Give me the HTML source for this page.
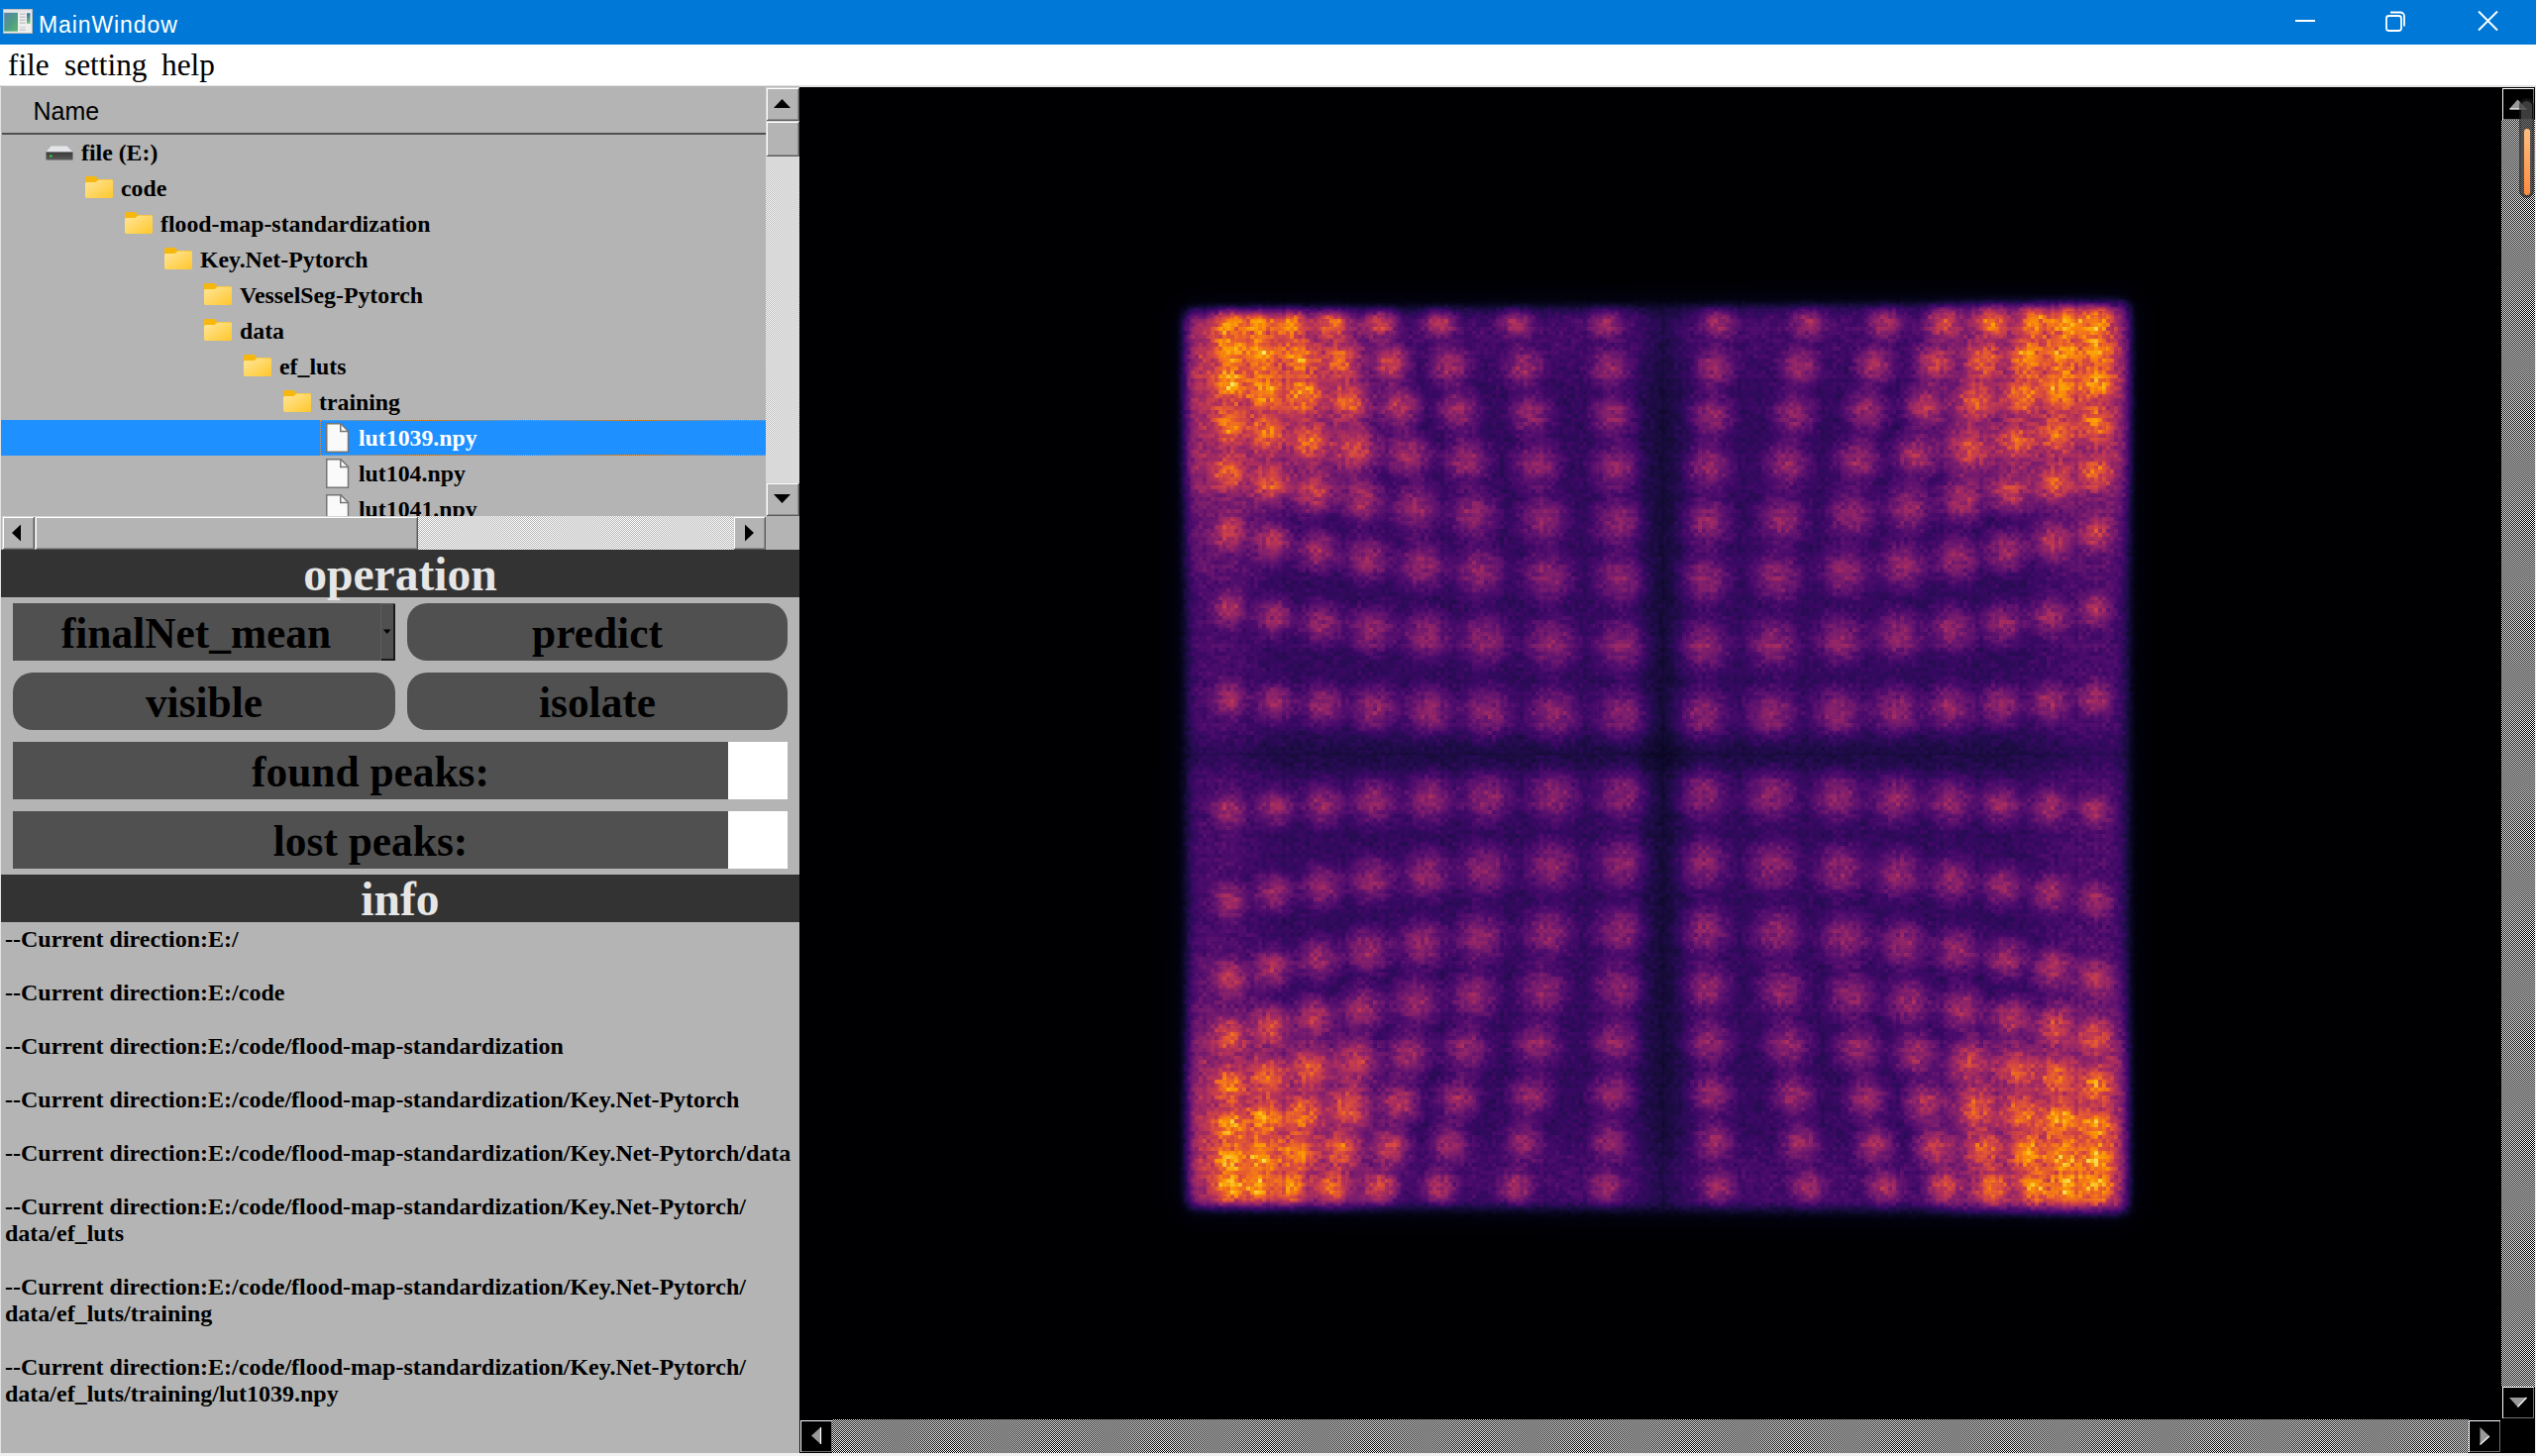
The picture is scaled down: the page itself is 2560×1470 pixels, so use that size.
<!DOCTYPE html>
<html><head><meta charset="utf-8">
<style>
*{margin:0;padding:0;box-sizing:border-box}
html,body{width:2560px;height:1470px;overflow:hidden;background:#f0f0f0}
body{position:relative;font-family:"Liberation Serif",serif}
.a{position:absolute}
#title{left:0;top:0;width:2560px;height:45px;background:#0078d7}
#title .t{left:39px;top:10px;font:23px/30px "Liberation Sans",sans-serif;color:#fff;letter-spacing:0.9px}
#menu{left:0;top:45px;width:2560px;height:42px;background:#fff}
#menu span{position:absolute;top:3px;font:31.3px/36px "Liberation Serif",serif;color:#000}
#left{left:0;top:87px;width:807px;height:1383px;background:#b4b4b4}
.tree{font:bold 23.8px/36px "Liberation Serif",serif;color:#000;white-space:nowrap}
.chk{background:repeating-conic-gradient(#fff 0 25%,#b4b4b4 0 50%) 0 0/2px 2px}
.chk2{background:repeating-conic-gradient(#fff 0 25%,#000 0 50%) 0 0/2px 2px}
.btn3d{background:#b4b4b4;box-shadow:inset 1px 1px 0 #d4d4d4,inset -1px -1px 0 #5a5a5a,inset 2px 2px 0 #fff,inset -2px -2px 0 #8c8c8c}
.band{left:1px;width:806px;background:#333;color:#e6e6e6;font:bold 47.6px/48px "Liberation Serif",serif;text-align:center}
.gbtn{background:#505050;color:#000;font:bold 43.4px/58px "Liberation Serif",serif;text-align:center;white-space:nowrap}
.info p{font:bold 24px/27px "Liberation Serif",serif;color:#000;margin:0 0 27px 0}
.bb{background:#000;box-shadow:inset 1px 1px 0 #fff,inset -1px -1px 0 #6e6e6e,inset 2px 2px 0 #000,inset -2px -2px 0 #000}
</style></head><body>

<div id="title" class="a">
  <svg class="a" style="left:3px;top:9px" width="30" height="25" viewBox="0 0 30 25">
    <defs><linearGradient id="ig" x1="0" y1="0" x2="1" y2="1"><stop offset="0" stop-color="#5a82a8"/><stop offset="0.5" stop-color="#4e9a88"/><stop offset="1" stop-color="#62b56c"/></linearGradient>
    <linearGradient id="ig2" x1="0" y1="0" x2="0" y2="1"><stop offset="0" stop-color="#3f6aa0"/><stop offset="1" stop-color="#72c47a"/></linearGradient></defs>
    <rect x="0.4" y="0.4" width="29.2" height="24.2" fill="#eeeeee" stroke="#c9b6a2" stroke-width="0.8"/>
    <rect x="0.8" y="0.8" width="28.4" height="2.6" fill="#e2e4ea"/>
    <rect x="1.2" y="3.8" width="13.8" height="18.9" fill="url(#ig)"/>
    <rect x="17" y="4.4" width="5.7" height="1.6" fill="#c8c8c8"/><rect x="17" y="7.4" width="5.7" height="1.6" fill="#c8c8c8"/>
    <rect x="17" y="10.4" width="5.7" height="1.6" fill="#c8c8c8"/><rect x="17" y="13.4" width="5.7" height="1.6" fill="#c8c8c8"/>
    <rect x="17" y="18" width="5.7" height="0.8" fill="#c8c8c8"/><rect x="17" y="20.2" width="5.7" height="1.6" fill="#c8c8c8"/>
    <rect x="24" y="4.2" width="3.5" height="10.6" fill="url(#ig2)"/>
  </svg>
  <div class="a t">MainWindow</div>
  <svg class="a" style="left:2300px;top:0" width="260" height="45" viewBox="2300 0 260 45">
    <rect x="2317" y="20" width="20" height="2" fill="#fff"/>
    <rect x="2409" y="16" width="15" height="15" rx="2.5" fill="none" stroke="#fff" stroke-width="1.8"/>
    <path d="M2413 12.5 h10 a4 4 0 0 1 4 4 v10" fill="none" stroke="#fff" stroke-width="1.8"/>
    <path d="M2502 11.5 L2521 30.5 M2521 11.5 L2502 30.5" stroke="#fff" stroke-width="1.9"/>
  </svg>
</div>

<div id="menu" class="a">
  <span style="left:8px">file</span>
  <span style="left:65px">setting</span>
  <span style="left:163px">help</span>
</div>
<div class="a" style="left:0;top:86px;width:2560px;height:2px;background:#e3e3e3"></div>
<div id="left" class="a"></div>
<svg width="0" height="0" style="position:absolute"><defs>
<linearGradient id="fg" x1="0" y1="0" x2="1" y2="1"><stop offset="0" stop-color="#ffe69a"/><stop offset="1" stop-color="#ffc72c"/></linearGradient>
</defs></svg>
<div class="a" style="left:2px;top:88px;width:771px;height:46px;background:#b4b4b4"></div>
<div class="a" style="left:33.5px;top:97px;font:25px/30px 'Liberation Sans',sans-serif;color:#000">Name</div>
<div class="a" style="left:2px;top:134px;width:771px;height:2px;background:#505050"></div>
<div class="a tree" style="left:0;top:136px;width:773px;height:385px;overflow:hidden">
<svg class="a" style="left:46px;top:11px" width="28" height="15" viewBox="0 0 28 15">
<defs><linearGradient id="dg1" x1="0" y1="0" x2="0" y2="1"><stop offset="0" stop-color="#3a3a3a"/><stop offset="1" stop-color="#5a5a5a"/></linearGradient></defs>
<path d="M5.5 0.5 H21.5 L27.5 6.5 H0.5 Z" fill="#e4e5e8"/>
<rect x="0.5" y="6.5" width="27" height="8" fill="url(#dg1)"/>
<circle cx="5.3" cy="10.6" r="1.3" fill="#2fd02f"/>
</svg>
<div class="a" style="left:82px;top:0px;color:#000">file (E:)</div>
<svg class="a" style="left:86px;top:42px" width="28" height="22" viewBox="0 0 28 22">
<path d="M0 1.2 Q0 0 1.2 0 H10.5 L13.5 3 H26.8 Q28 3 28 4.2 V8 H0 Z" fill="#f6b70f"/>
<path d="M0 7.5 Q0 6 1.5 6 H10.5 L13.5 3.6 H26.5 Q28 3.6 28 5 V20.6 Q28 22 26.6 22 H1.4 Q0 22 0 20.6 Z" fill="url(#fg)"/>
</svg>
<div class="a" style="left:122px;top:36px;color:#000">code</div>
<svg class="a" style="left:126px;top:78px" width="28" height="22" viewBox="0 0 28 22">
<path d="M0 1.2 Q0 0 1.2 0 H10.5 L13.5 3 H26.8 Q28 3 28 4.2 V8 H0 Z" fill="#f6b70f"/>
<path d="M0 7.5 Q0 6 1.5 6 H10.5 L13.5 3.6 H26.5 Q28 3.6 28 5 V20.6 Q28 22 26.6 22 H1.4 Q0 22 0 20.6 Z" fill="url(#fg)"/>
</svg>
<div class="a" style="left:162px;top:72px;color:#000">flood-map-standardization</div>
<svg class="a" style="left:166px;top:114px" width="28" height="22" viewBox="0 0 28 22">
<path d="M0 1.2 Q0 0 1.2 0 H10.5 L13.5 3 H26.8 Q28 3 28 4.2 V8 H0 Z" fill="#f6b70f"/>
<path d="M0 7.5 Q0 6 1.5 6 H10.5 L13.5 3.6 H26.5 Q28 3.6 28 5 V20.6 Q28 22 26.6 22 H1.4 Q0 22 0 20.6 Z" fill="url(#fg)"/>
</svg>
<div class="a" style="left:202px;top:108px;color:#000">Key.Net-Pytorch</div>
<svg class="a" style="left:206px;top:150px" width="28" height="22" viewBox="0 0 28 22">
<path d="M0 1.2 Q0 0 1.2 0 H10.5 L13.5 3 H26.8 Q28 3 28 4.2 V8 H0 Z" fill="#f6b70f"/>
<path d="M0 7.5 Q0 6 1.5 6 H10.5 L13.5 3.6 H26.5 Q28 3.6 28 5 V20.6 Q28 22 26.6 22 H1.4 Q0 22 0 20.6 Z" fill="url(#fg)"/>
</svg>
<div class="a" style="left:242px;top:144px;color:#000">VesselSeg-Pytorch</div>
<svg class="a" style="left:206px;top:186px" width="28" height="22" viewBox="0 0 28 22">
<path d="M0 1.2 Q0 0 1.2 0 H10.5 L13.5 3 H26.8 Q28 3 28 4.2 V8 H0 Z" fill="#f6b70f"/>
<path d="M0 7.5 Q0 6 1.5 6 H10.5 L13.5 3.6 H26.5 Q28 3.6 28 5 V20.6 Q28 22 26.6 22 H1.4 Q0 22 0 20.6 Z" fill="url(#fg)"/>
</svg>
<div class="a" style="left:242px;top:180px;color:#000">data</div>
<svg class="a" style="left:246px;top:222px" width="28" height="22" viewBox="0 0 28 22">
<path d="M0 1.2 Q0 0 1.2 0 H10.5 L13.5 3 H26.8 Q28 3 28 4.2 V8 H0 Z" fill="#f6b70f"/>
<path d="M0 7.5 Q0 6 1.5 6 H10.5 L13.5 3.6 H26.5 Q28 3.6 28 5 V20.6 Q28 22 26.6 22 H1.4 Q0 22 0 20.6 Z" fill="url(#fg)"/>
</svg>
<div class="a" style="left:282px;top:216px;color:#000">ef_luts</div>
<svg class="a" style="left:286px;top:258px" width="28" height="22" viewBox="0 0 28 22">
<path d="M0 1.2 Q0 0 1.2 0 H10.5 L13.5 3 H26.8 Q28 3 28 4.2 V8 H0 Z" fill="#f6b70f"/>
<path d="M0 7.5 Q0 6 1.5 6 H10.5 L13.5 3.6 H26.5 Q28 3.6 28 5 V20.6 Q28 22 26.6 22 H1.4 Q0 22 0 20.6 Z" fill="url(#fg)"/>
</svg>
<div class="a" style="left:322px;top:252px;color:#000">training</div>
<div class="a" style="left:0;top:288px;width:773px;height:36px;background:#1e90ff"></div>
<div class="a" style="left:323px;top:288px;width:452px;height:36px;border:1px dotted #f08a1c"></div>
<svg class="a" style="left:329px;top:291px" width="24" height="30" viewBox="0 0 24 30">
<path d="M0.75 0.75 H15 L22.5 8.25 V29.25 H0.75 Z" fill="#fafafa" stroke="#757575" stroke-width="1.5"/>
<path d="M14.75 0.75 V8.5 H22.5" fill="none" stroke="#757575" stroke-width="1.5"/>
</svg>
<div class="a" style="left:362px;top:288px;color:#fff">lut1039.npy</div>
<svg class="a" style="left:329px;top:327px" width="24" height="30" viewBox="0 0 24 30">
<path d="M0.75 0.75 H15 L22.5 8.25 V29.25 H0.75 Z" fill="#fafafa" stroke="#757575" stroke-width="1.5"/>
<path d="M14.75 0.75 V8.5 H22.5" fill="none" stroke="#757575" stroke-width="1.5"/>
</svg>
<div class="a" style="left:362px;top:324px;color:#000">lut104.npy</div>
<svg class="a" style="left:329px;top:363px" width="24" height="30" viewBox="0 0 24 30">
<path d="M0.75 0.75 H15 L22.5 8.25 V29.25 H0.75 Z" fill="#fafafa" stroke="#757575" stroke-width="1.5"/>
<path d="M14.75 0.75 V8.5 H22.5" fill="none" stroke="#757575" stroke-width="1.5"/>
</svg>
<div class="a" style="left:362px;top:360px;color:#000">lut1041.npy</div>
</div>
<div class="a chk" style="left:773px;top:88px;width:34px;height:433px"></div>
<div class="a btn3d" style="left:773px;top:88px;width:34px;height:34px"></div>
<svg class="a" style="left:773px;top:88px" width="34" height="34"><path d="M8 21 L16.5 12 L25 21 Z" fill="#000"/></svg>
<div class="a btn3d" style="left:773px;top:122px;width:34px;height:36px"></div>
<div class="a btn3d" style="left:773px;top:487px;width:34px;height:34px"></div>
<svg class="a" style="left:773px;top:487px" width="34" height="34"><path d="M8 12 L16.5 21 L25 12 Z" fill="#000"/></svg>
<div class="a chk" style="left:35px;top:521px;width:705px;height:34px"></div>
<div class="a btn3d" style="left:2px;top:521px;width:33px;height:34px"></div>
<svg class="a" style="left:0;top:521px" width="35" height="34"><path d="M21 8.5 L12 17 L21 25.5 Z" fill="#000"/></svg>
<div class="a btn3d" style="left:35px;top:521px;width:387px;height:34px"></div>
<div class="a btn3d" style="left:740px;top:521px;width:33px;height:34px"></div>
<svg class="a" style="left:740px;top:521px" width="33" height="34"><path d="M12 8.5 L21 17 L12 25.5 Z" fill="#000"/></svg>
<div class="a" style="left:773px;top:521px;width:34px;height:34px;background:#b4b4b4"></div>
<div class="a band" style="top:555px;height:48px"><div style="position:relative;top:1px">operation</div></div>
<div class="a gbtn" style="left:13px;top:609px;width:386px;height:58px"></div>
<div class="a gbtn" style="left:13px;top:609px;width:370px;height:58px;line-height:60px">finalNet_mean</div>
<div class="a" style="left:384px;top:609px;width:15px;height:58px;background:#505050;box-shadow:inset 1px 1px 0 #5e5e5e,inset -2px -2px 0 #1a1a1a"></div>
<svg class="a" style="left:384px;top:609px" width="15" height="58"><path d="M3 26.5 L10.5 26.5 L6.75 31 Z" fill="#000"/></svg>
<div class="a gbtn" style="left:411px;top:609px;width:384px;height:58px;border-radius:20px;line-height:60px">predict</div>
<div class="a gbtn" style="left:13px;top:679px;width:386px;height:58px;border-radius:20px;line-height:60px">visible</div>
<div class="a gbtn" style="left:411px;top:679px;width:384px;height:58px;border-radius:20px;line-height:60px">isolate</div>
<div class="a gbtn" style="left:13px;top:749px;width:722px;height:58px;line-height:60px">found peaks:</div>
<div class="a" style="left:735px;top:749px;width:60px;height:58px;background:#fff"></div>
<div class="a gbtn" style="left:13px;top:819px;width:722px;height:58px;line-height:60px">lost peaks:</div>
<div class="a" style="left:735px;top:819px;width:60px;height:58px;background:#fff"></div>
<div class="a band" style="top:883px;height:48px"><div style="position:relative;top:1px">info</div></div>
<div class="a info" style="left:5px;top:935px;width:802px;white-space:nowrap"><p>--Current direction:E:/</p><p>--Current direction:E:/code</p><p>--Current direction:E:/code/flood-map-standardization</p><p>--Current direction:E:/code/flood-map-standardization/Key.Net-Pytorch</p><p>--Current direction:E:/code/flood-map-standardization/Key.Net-Pytorch/data</p><p>--Current direction:E:/code/flood-map-standardization/Key.Net-Pytorch/<br>data/ef_luts</p><p>--Current direction:E:/code/flood-map-standardization/Key.Net-Pytorch/<br>data/ef_luts/training</p><p>--Current direction:E:/code/flood-map-standardization/Key.Net-Pytorch/<br>data/ef_luts/training/lut1039.npy</p></div>
<div class="a" style="left:0;top:88px;width:1px;height:1379px;background:#e3e3e3"></div>
<div id="gv" class="a" style="left:807px;top:88px;width:1753px;height:1379px;background:#000;overflow:hidden"><svg class="a" style="left:0;top:0" width="1753" height="1379" viewBox="807 88 1753 1379">
<defs>
<filter id="cm" filterUnits="userSpaceOnUse" x="807" y="88" width="1753" height="1379" color-interpolation-filters="sRGB"><feComponentTransfer><feFuncR type="table" tableValues="0.0015 0.0140 0.0423 0.0820 0.1293 0.1834 0.2383 0.2908 0.3415 0.3915 0.4412 0.4910 0.5409 0.5907 0.6401 0.6887 0.7357 0.7805 0.8224 0.8605 0.8943 0.9232 0.9470 0.9654 0.9784 0.9860 0.9879 0.9841 0.9746 0.9606 0.9476 0.9545 0.9884"/><feFuncG type="table" tableValues="0.0005 0.0112 0.0281 0.0433 0.0473 0.0403 0.0366 0.0456 0.0623 0.0809 0.0993 0.1172 0.1347 0.1526 0.1714 0.1922 0.2159 0.2433 0.2752 0.3119 0.3534 0.3994 0.4492 0.5022 0.5579 0.6158 0.6753 0.7361 0.7977 0.8591 0.9174 0.9659 0.9984"/><feFuncB type="table" tableValues="0.0139 0.0719 0.1411 0.2153 0.2908 0.3550 0.3964 0.4186 0.4294 0.4331 0.4316 0.4256 0.4151 0.4003 0.3811 0.3576 0.3302 0.2995 0.2661 0.2306 0.1936 0.1552 0.1153 0.0739 0.0349 0.0256 0.0653 0.1295 0.2063 0.2980 0.4107 0.5404 0.6449"/></feComponentTransfer></filter>
<filter id="bb" x="-20%" y="-20%" width="140%" height="140%"><feGaussianBlur stdDeviation="11"/></filter>
<filter id="gb" x="-50%" y="-50%" width="200%" height="200%"><feGaussianBlur stdDeviation="20"/></filter>
<filter id="gb2" x="-50%" y="-50%" width="200%" height="200%"><feGaussianBlur stdDeviation="14"/></filter>
<radialGradient id="g"><stop offset="0.00" stop-color="#fff" stop-opacity="1.000"/><stop offset="0.15" stop-color="#fff" stop-opacity="0.938"/><stop offset="0.30" stop-color="#fff" stop-opacity="0.772"/><stop offset="0.45" stop-color="#fff" stop-opacity="0.554"/><stop offset="0.60" stop-color="#fff" stop-opacity="0.339"/><stop offset="0.75" stop-color="#fff" stop-opacity="0.167"/><stop offset="0.90" stop-color="#fff" stop-opacity="0.050"/><stop offset="1.00" stop-color="#fff" stop-opacity="0.000"/></radialGradient>
<pattern id="nz" patternUnits="userSpaceOnUse" x="1186" y="306" width="80" height="80"><rect x="0" y="0" width="4" height="4" fill-opacity="0.07"/><rect x="4" y="0" width="4" height="4" fill-opacity="0.03"/><rect x="8" y="0" width="4" height="4" fill-opacity="0.14"/><rect x="16" y="0" width="4" height="4" fill-opacity="0.12"/><rect x="20" y="0" width="4" height="4" fill-opacity="0.08"/><rect x="28" y="0" width="4" height="4" fill-opacity="0.11"/><rect x="36" y="0" width="4" height="4" fill-opacity="0.10"/><rect x="48" y="0" width="4" height="4" fill-opacity="0.09"/><rect x="52" y="0" width="4" height="4" fill-opacity="0.18"/><rect x="60" y="0" width="4" height="4" fill-opacity="0.05"/><rect x="64" y="0" width="4" height="4" fill-opacity="0.14"/><rect x="68" y="0" width="4" height="4" fill-opacity="0.21"/><rect x="72" y="0" width="4" height="4" fill-opacity="0.13"/><rect x="76" y="0" width="4" height="4" fill-opacity="0.09"/><rect x="0" y="4" width="4" height="4" fill-opacity="0.21"/><rect x="8" y="4" width="4" height="4" fill-opacity="0.19"/><rect x="12" y="4" width="4" height="4" fill-opacity="0.06"/><rect x="16" y="4" width="4" height="4" fill-opacity="0.03"/><rect x="24" y="4" width="4" height="4" fill-opacity="0.07"/><rect x="28" y="4" width="4" height="4" fill-opacity="0.18"/><rect x="32" y="4" width="4" height="4" fill-opacity="0.04"/><rect x="36" y="4" width="4" height="4" fill-opacity="0.13"/><rect x="40" y="4" width="4" height="4" fill-opacity="0.14"/><rect x="44" y="4" width="4" height="4" fill-opacity="0.08"/><rect x="48" y="4" width="4" height="4" fill-opacity="0.12"/><rect x="60" y="4" width="4" height="4" fill-opacity="0.05"/><rect x="64" y="4" width="4" height="4" fill-opacity="0.15"/><rect x="68" y="4" width="4" height="4" fill-opacity="0.09"/><rect x="72" y="4" width="4" height="4" fill-opacity="0.07"/><rect x="76" y="4" width="4" height="4" fill-opacity="0.13"/><rect x="0" y="8" width="4" height="4" fill-opacity="0.10"/><rect x="4" y="8" width="4" height="4" fill-opacity="0.07"/><rect x="8" y="8" width="4" height="4" fill-opacity="0.17"/><rect x="12" y="8" width="4" height="4" fill-opacity="0.15"/><rect x="16" y="8" width="4" height="4" fill-opacity="0.05"/><rect x="20" y="8" width="4" height="4" fill-opacity="0.13"/><rect x="24" y="8" width="4" height="4" fill-opacity="0.12"/><rect x="28" y="8" width="4" height="4" fill-opacity="0.19"/><rect x="32" y="8" width="4" height="4" fill-opacity="0.16"/><rect x="36" y="8" width="4" height="4" fill-opacity="0.06"/><rect x="40" y="8" width="4" height="4" fill-opacity="0.22"/><rect x="48" y="8" width="4" height="4" fill-opacity="0.09"/><rect x="52" y="8" width="4" height="4" fill-opacity="0.17"/><rect x="56" y="8" width="4" height="4" fill-opacity="0.03"/><rect x="60" y="8" width="4" height="4" fill-opacity="0.11"/><rect x="68" y="8" width="4" height="4" fill-opacity="0.15"/><rect x="72" y="8" width="4" height="4" fill-opacity="0.17"/><rect x="76" y="8" width="4" height="4" fill-opacity="0.13"/><rect x="0" y="12" width="4" height="4" fill-opacity="0.19"/><rect x="4" y="12" width="4" height="4" fill-opacity="0.07"/><rect x="8" y="12" width="4" height="4" fill-opacity="0.15"/><rect x="12" y="12" width="4" height="4" fill-opacity="0.13"/><rect x="16" y="12" width="4" height="4" fill-opacity="0.13"/><rect x="20" y="12" width="4" height="4" fill-opacity="0.10"/><rect x="24" y="12" width="4" height="4" fill-opacity="0.18"/><rect x="28" y="12" width="4" height="4" fill-opacity="0.21"/><rect x="32" y="12" width="4" height="4" fill-opacity="0.10"/><rect x="36" y="12" width="4" height="4" fill-opacity="0.15"/><rect x="44" y="12" width="4" height="4" fill-opacity="0.15"/><rect x="48" y="12" width="4" height="4" fill-opacity="0.14"/><rect x="52" y="12" width="4" height="4" fill-opacity="0.22"/><rect x="56" y="12" width="4" height="4" fill-opacity="0.18"/><rect x="60" y="12" width="4" height="4" fill-opacity="0.06"/><rect x="64" y="12" width="4" height="4" fill-opacity="0.08"/><rect x="68" y="12" width="4" height="4" fill-opacity="0.15"/><rect x="76" y="12" width="4" height="4" fill-opacity="0.10"/><rect x="0" y="16" width="4" height="4" fill-opacity="0.04"/><rect x="12" y="16" width="4" height="4" fill-opacity="0.17"/><rect x="20" y="16" width="4" height="4" fill-opacity="0.05"/><rect x="24" y="16" width="4" height="4" fill-opacity="0.09"/><rect x="28" y="16" width="4" height="4" fill-opacity="0.19"/><rect x="36" y="16" width="4" height="4" fill-opacity="0.10"/><rect x="40" y="16" width="4" height="4" fill-opacity="0.12"/><rect x="44" y="16" width="4" height="4" fill-opacity="0.19"/><rect x="48" y="16" width="4" height="4" fill-opacity="0.18"/><rect x="52" y="16" width="4" height="4" fill-opacity="0.19"/><rect x="56" y="16" width="4" height="4" fill-opacity="0.06"/><rect x="60" y="16" width="4" height="4" fill-opacity="0.09"/><rect x="64" y="16" width="4" height="4" fill-opacity="0.08"/><rect x="68" y="16" width="4" height="4" fill-opacity="0.19"/><rect x="72" y="16" width="4" height="4" fill-opacity="0.21"/><rect x="76" y="16" width="4" height="4" fill-opacity="0.03"/><rect x="0" y="20" width="4" height="4" fill-opacity="0.04"/><rect x="4" y="20" width="4" height="4" fill-opacity="0.05"/><rect x="8" y="20" width="4" height="4" fill-opacity="0.05"/><rect x="12" y="20" width="4" height="4" fill-opacity="0.11"/><rect x="16" y="20" width="4" height="4" fill-opacity="0.13"/><rect x="20" y="20" width="4" height="4" fill-opacity="0.06"/><rect x="28" y="20" width="4" height="4" fill-opacity="0.09"/><rect x="32" y="20" width="4" height="4" fill-opacity="0.08"/><rect x="36" y="20" width="4" height="4" fill-opacity="0.12"/><rect x="40" y="20" width="4" height="4" fill-opacity="0.21"/><rect x="44" y="20" width="4" height="4" fill-opacity="0.15"/><rect x="48" y="20" width="4" height="4" fill-opacity="0.11"/><rect x="52" y="20" width="4" height="4" fill-opacity="0.14"/><rect x="56" y="20" width="4" height="4" fill-opacity="0.15"/><rect x="64" y="20" width="4" height="4" fill-opacity="0.20"/><rect x="68" y="20" width="4" height="4" fill-opacity="0.17"/><rect x="72" y="20" width="4" height="4" fill-opacity="0.19"/><rect x="76" y="20" width="4" height="4" fill-opacity="0.18"/><rect x="0" y="24" width="4" height="4" fill-opacity="0.09"/><rect x="4" y="24" width="4" height="4" fill-opacity="0.09"/><rect x="12" y="24" width="4" height="4" fill-opacity="0.14"/><rect x="24" y="24" width="4" height="4" fill-opacity="0.05"/><rect x="28" y="24" width="4" height="4" fill-opacity="0.04"/><rect x="32" y="24" width="4" height="4" fill-opacity="0.07"/><rect x="44" y="24" width="4" height="4" fill-opacity="0.03"/><rect x="52" y="24" width="4" height="4" fill-opacity="0.08"/><rect x="60" y="24" width="4" height="4" fill-opacity="0.19"/><rect x="64" y="24" width="4" height="4" fill-opacity="0.14"/><rect x="68" y="24" width="4" height="4" fill-opacity="0.03"/><rect x="72" y="24" width="4" height="4" fill-opacity="0.06"/><rect x="76" y="24" width="4" height="4" fill-opacity="0.08"/><rect x="0" y="28" width="4" height="4" fill-opacity="0.08"/><rect x="8" y="28" width="4" height="4" fill-opacity="0.19"/><rect x="12" y="28" width="4" height="4" fill-opacity="0.22"/><rect x="16" y="28" width="4" height="4" fill-opacity="0.10"/><rect x="20" y="28" width="4" height="4" fill-opacity="0.11"/><rect x="32" y="28" width="4" height="4" fill-opacity="0.08"/><rect x="36" y="28" width="4" height="4" fill-opacity="0.06"/><rect x="40" y="28" width="4" height="4" fill-opacity="0.18"/><rect x="44" y="28" width="4" height="4" fill-opacity="0.04"/><rect x="52" y="28" width="4" height="4" fill-opacity="0.21"/><rect x="56" y="28" width="4" height="4" fill-opacity="0.12"/><rect x="60" y="28" width="4" height="4" fill-opacity="0.03"/><rect x="64" y="28" width="4" height="4" fill-opacity="0.12"/><rect x="72" y="28" width="4" height="4" fill-opacity="0.12"/><rect x="76" y="28" width="4" height="4" fill-opacity="0.22"/><rect x="0" y="32" width="4" height="4" fill-opacity="0.19"/><rect x="4" y="32" width="4" height="4" fill-opacity="0.15"/><rect x="8" y="32" width="4" height="4" fill-opacity="0.06"/><rect x="12" y="32" width="4" height="4" fill-opacity="0.08"/><rect x="16" y="32" width="4" height="4" fill-opacity="0.04"/><rect x="20" y="32" width="4" height="4" fill-opacity="0.17"/><rect x="24" y="32" width="4" height="4" fill-opacity="0.12"/><rect x="28" y="32" width="4" height="4" fill-opacity="0.17"/><rect x="32" y="32" width="4" height="4" fill-opacity="0.07"/><rect x="36" y="32" width="4" height="4" fill-opacity="0.05"/><rect x="40" y="32" width="4" height="4" fill-opacity="0.18"/><rect x="44" y="32" width="4" height="4" fill-opacity="0.22"/><rect x="48" y="32" width="4" height="4" fill-opacity="0.19"/><rect x="52" y="32" width="4" height="4" fill-opacity="0.18"/><rect x="56" y="32" width="4" height="4" fill-opacity="0.18"/><rect x="60" y="32" width="4" height="4" fill-opacity="0.16"/><rect x="64" y="32" width="4" height="4" fill-opacity="0.05"/><rect x="68" y="32" width="4" height="4" fill-opacity="0.11"/><rect x="72" y="32" width="4" height="4" fill-opacity="0.08"/><rect x="4" y="36" width="4" height="4" fill-opacity="0.06"/><rect x="8" y="36" width="4" height="4" fill-opacity="0.06"/><rect x="12" y="36" width="4" height="4" fill-opacity="0.15"/><rect x="16" y="36" width="4" height="4" fill-opacity="0.21"/><rect x="20" y="36" width="4" height="4" fill-opacity="0.10"/><rect x="24" y="36" width="4" height="4" fill-opacity="0.21"/><rect x="28" y="36" width="4" height="4" fill-opacity="0.22"/><rect x="32" y="36" width="4" height="4" fill-opacity="0.21"/><rect x="36" y="36" width="4" height="4" fill-opacity="0.08"/><rect x="40" y="36" width="4" height="4" fill-opacity="0.05"/><rect x="44" y="36" width="4" height="4" fill-opacity="0.05"/><rect x="48" y="36" width="4" height="4" fill-opacity="0.04"/><rect x="52" y="36" width="4" height="4" fill-opacity="0.04"/><rect x="56" y="36" width="4" height="4" fill-opacity="0.14"/><rect x="60" y="36" width="4" height="4" fill-opacity="0.20"/><rect x="64" y="36" width="4" height="4" fill-opacity="0.18"/><rect x="68" y="36" width="4" height="4" fill-opacity="0.11"/><rect x="72" y="36" width="4" height="4" fill-opacity="0.14"/><rect x="76" y="36" width="4" height="4" fill-opacity="0.18"/><rect x="4" y="40" width="4" height="4" fill-opacity="0.15"/><rect x="8" y="40" width="4" height="4" fill-opacity="0.20"/><rect x="12" y="40" width="4" height="4" fill-opacity="0.17"/><rect x="16" y="40" width="4" height="4" fill-opacity="0.17"/><rect x="20" y="40" width="4" height="4" fill-opacity="0.11"/><rect x="24" y="40" width="4" height="4" fill-opacity="0.04"/><rect x="28" y="40" width="4" height="4" fill-opacity="0.17"/><rect x="32" y="40" width="4" height="4" fill-opacity="0.07"/><rect x="36" y="40" width="4" height="4" fill-opacity="0.18"/><rect x="40" y="40" width="4" height="4" fill-opacity="0.21"/><rect x="44" y="40" width="4" height="4" fill-opacity="0.09"/><rect x="48" y="40" width="4" height="4" fill-opacity="0.09"/><rect x="52" y="40" width="4" height="4" fill-opacity="0.21"/><rect x="56" y="40" width="4" height="4" fill-opacity="0.16"/><rect x="60" y="40" width="4" height="4" fill-opacity="0.04"/><rect x="68" y="40" width="4" height="4" fill-opacity="0.03"/><rect x="72" y="40" width="4" height="4" fill-opacity="0.20"/><rect x="76" y="40" width="4" height="4" fill-opacity="0.18"/><rect x="0" y="44" width="4" height="4" fill-opacity="0.03"/><rect x="4" y="44" width="4" height="4" fill-opacity="0.18"/><rect x="8" y="44" width="4" height="4" fill-opacity="0.22"/><rect x="12" y="44" width="4" height="4" fill-opacity="0.14"/><rect x="16" y="44" width="4" height="4" fill-opacity="0.08"/><rect x="20" y="44" width="4" height="4" fill-opacity="0.12"/><rect x="32" y="44" width="4" height="4" fill-opacity="0.21"/><rect x="36" y="44" width="4" height="4" fill-opacity="0.14"/><rect x="40" y="44" width="4" height="4" fill-opacity="0.12"/><rect x="44" y="44" width="4" height="4" fill-opacity="0.21"/><rect x="48" y="44" width="4" height="4" fill-opacity="0.10"/><rect x="52" y="44" width="4" height="4" fill-opacity="0.19"/><rect x="56" y="44" width="4" height="4" fill-opacity="0.18"/><rect x="60" y="44" width="4" height="4" fill-opacity="0.05"/><rect x="64" y="44" width="4" height="4" fill-opacity="0.06"/><rect x="68" y="44" width="4" height="4" fill-opacity="0.06"/><rect x="72" y="44" width="4" height="4" fill-opacity="0.05"/><rect x="76" y="44" width="4" height="4" fill-opacity="0.13"/><rect x="0" y="48" width="4" height="4" fill-opacity="0.06"/><rect x="4" y="48" width="4" height="4" fill-opacity="0.09"/><rect x="12" y="48" width="4" height="4" fill-opacity="0.20"/><rect x="16" y="48" width="4" height="4" fill-opacity="0.08"/><rect x="20" y="48" width="4" height="4" fill-opacity="0.10"/><rect x="24" y="48" width="4" height="4" fill-opacity="0.13"/><rect x="28" y="48" width="4" height="4" fill-opacity="0.20"/><rect x="32" y="48" width="4" height="4" fill-opacity="0.09"/><rect x="36" y="48" width="4" height="4" fill-opacity="0.20"/><rect x="40" y="48" width="4" height="4" fill-opacity="0.11"/><rect x="44" y="48" width="4" height="4" fill-opacity="0.12"/><rect x="48" y="48" width="4" height="4" fill-opacity="0.12"/><rect x="56" y="48" width="4" height="4" fill-opacity="0.10"/><rect x="60" y="48" width="4" height="4" fill-opacity="0.04"/><rect x="68" y="48" width="4" height="4" fill-opacity="0.18"/><rect x="72" y="48" width="4" height="4" fill-opacity="0.04"/><rect x="76" y="48" width="4" height="4" fill-opacity="0.10"/><rect x="0" y="52" width="4" height="4" fill-opacity="0.16"/><rect x="4" y="52" width="4" height="4" fill-opacity="0.12"/><rect x="8" y="52" width="4" height="4" fill-opacity="0.07"/><rect x="12" y="52" width="4" height="4" fill-opacity="0.11"/><rect x="16" y="52" width="4" height="4" fill-opacity="0.12"/><rect x="20" y="52" width="4" height="4" fill-opacity="0.17"/><rect x="28" y="52" width="4" height="4" fill-opacity="0.12"/><rect x="32" y="52" width="4" height="4" fill-opacity="0.05"/><rect x="36" y="52" width="4" height="4" fill-opacity="0.06"/><rect x="40" y="52" width="4" height="4" fill-opacity="0.17"/><rect x="44" y="52" width="4" height="4" fill-opacity="0.11"/><rect x="48" y="52" width="4" height="4" fill-opacity="0.12"/><rect x="52" y="52" width="4" height="4" fill-opacity="0.17"/><rect x="56" y="52" width="4" height="4" fill-opacity="0.20"/><rect x="60" y="52" width="4" height="4" fill-opacity="0.10"/><rect x="64" y="52" width="4" height="4" fill-opacity="0.13"/><rect x="68" y="52" width="4" height="4" fill-opacity="0.11"/><rect x="72" y="52" width="4" height="4" fill-opacity="0.11"/><rect x="76" y="52" width="4" height="4" fill-opacity="0.15"/><rect x="0" y="56" width="4" height="4" fill-opacity="0.10"/><rect x="4" y="56" width="4" height="4" fill-opacity="0.12"/><rect x="8" y="56" width="4" height="4" fill-opacity="0.11"/><rect x="12" y="56" width="4" height="4" fill-opacity="0.21"/><rect x="16" y="56" width="4" height="4" fill-opacity="0.15"/><rect x="20" y="56" width="4" height="4" fill-opacity="0.19"/><rect x="24" y="56" width="4" height="4" fill-opacity="0.21"/><rect x="28" y="56" width="4" height="4" fill-opacity="0.06"/><rect x="32" y="56" width="4" height="4" fill-opacity="0.12"/><rect x="36" y="56" width="4" height="4" fill-opacity="0.21"/><rect x="40" y="56" width="4" height="4" fill-opacity="0.18"/><rect x="44" y="56" width="4" height="4" fill-opacity="0.03"/><rect x="52" y="56" width="4" height="4" fill-opacity="0.10"/><rect x="60" y="56" width="4" height="4" fill-opacity="0.05"/><rect x="68" y="56" width="4" height="4" fill-opacity="0.15"/><rect x="72" y="56" width="4" height="4" fill-opacity="0.17"/><rect x="76" y="56" width="4" height="4" fill-opacity="0.20"/><rect x="0" y="60" width="4" height="4" fill-opacity="0.03"/><rect x="4" y="60" width="4" height="4" fill-opacity="0.16"/><rect x="8" y="60" width="4" height="4" fill-opacity="0.15"/><rect x="12" y="60" width="4" height="4" fill-opacity="0.03"/><rect x="16" y="60" width="4" height="4" fill-opacity="0.19"/><rect x="20" y="60" width="4" height="4" fill-opacity="0.21"/><rect x="24" y="60" width="4" height="4" fill-opacity="0.05"/><rect x="28" y="60" width="4" height="4" fill-opacity="0.21"/><rect x="32" y="60" width="4" height="4" fill-opacity="0.09"/><rect x="36" y="60" width="4" height="4" fill-opacity="0.11"/><rect x="40" y="60" width="4" height="4" fill-opacity="0.22"/><rect x="44" y="60" width="4" height="4" fill-opacity="0.18"/><rect x="48" y="60" width="4" height="4" fill-opacity="0.04"/><rect x="52" y="60" width="4" height="4" fill-opacity="0.09"/><rect x="56" y="60" width="4" height="4" fill-opacity="0.11"/><rect x="60" y="60" width="4" height="4" fill-opacity="0.07"/><rect x="64" y="60" width="4" height="4" fill-opacity="0.04"/><rect x="68" y="60" width="4" height="4" fill-opacity="0.07"/><rect x="72" y="60" width="4" height="4" fill-opacity="0.16"/><rect x="0" y="64" width="4" height="4" fill-opacity="0.12"/><rect x="4" y="64" width="4" height="4" fill-opacity="0.10"/><rect x="12" y="64" width="4" height="4" fill-opacity="0.07"/><rect x="16" y="64" width="4" height="4" fill-opacity="0.14"/><rect x="20" y="64" width="4" height="4" fill-opacity="0.11"/><rect x="28" y="64" width="4" height="4" fill-opacity="0.22"/><rect x="32" y="64" width="4" height="4" fill-opacity="0.17"/><rect x="36" y="64" width="4" height="4" fill-opacity="0.21"/><rect x="44" y="64" width="4" height="4" fill-opacity="0.06"/><rect x="52" y="64" width="4" height="4" fill-opacity="0.17"/><rect x="56" y="64" width="4" height="4" fill-opacity="0.06"/><rect x="64" y="64" width="4" height="4" fill-opacity="0.09"/><rect x="68" y="64" width="4" height="4" fill-opacity="0.20"/><rect x="72" y="64" width="4" height="4" fill-opacity="0.18"/><rect x="76" y="64" width="4" height="4" fill-opacity="0.06"/><rect x="0" y="68" width="4" height="4" fill-opacity="0.03"/><rect x="4" y="68" width="4" height="4" fill-opacity="0.20"/><rect x="8" y="68" width="4" height="4" fill-opacity="0.13"/><rect x="12" y="68" width="4" height="4" fill-opacity="0.15"/><rect x="24" y="68" width="4" height="4" fill-opacity="0.15"/><rect x="28" y="68" width="4" height="4" fill-opacity="0.09"/><rect x="36" y="68" width="4" height="4" fill-opacity="0.21"/><rect x="40" y="68" width="4" height="4" fill-opacity="0.14"/><rect x="44" y="68" width="4" height="4" fill-opacity="0.18"/><rect x="52" y="68" width="4" height="4" fill-opacity="0.19"/><rect x="60" y="68" width="4" height="4" fill-opacity="0.19"/><rect x="64" y="68" width="4" height="4" fill-opacity="0.10"/><rect x="68" y="68" width="4" height="4" fill-opacity="0.07"/><rect x="72" y="68" width="4" height="4" fill-opacity="0.12"/><rect x="76" y="68" width="4" height="4" fill-opacity="0.20"/><rect x="0" y="72" width="4" height="4" fill-opacity="0.06"/><rect x="8" y="72" width="4" height="4" fill-opacity="0.12"/><rect x="12" y="72" width="4" height="4" fill-opacity="0.05"/><rect x="20" y="72" width="4" height="4" fill-opacity="0.04"/><rect x="28" y="72" width="4" height="4" fill-opacity="0.04"/><rect x="32" y="72" width="4" height="4" fill-opacity="0.07"/><rect x="36" y="72" width="4" height="4" fill-opacity="0.07"/><rect x="40" y="72" width="4" height="4" fill-opacity="0.17"/><rect x="44" y="72" width="4" height="4" fill-opacity="0.06"/><rect x="48" y="72" width="4" height="4" fill-opacity="0.11"/><rect x="52" y="72" width="4" height="4" fill-opacity="0.04"/><rect x="56" y="72" width="4" height="4" fill-opacity="0.08"/><rect x="64" y="72" width="4" height="4" fill-opacity="0.06"/><rect x="72" y="72" width="4" height="4" fill-opacity="0.16"/><rect x="76" y="72" width="4" height="4" fill-opacity="0.12"/><rect x="0" y="76" width="4" height="4" fill-opacity="0.04"/><rect x="4" y="76" width="4" height="4" fill-opacity="0.10"/><rect x="8" y="76" width="4" height="4" fill-opacity="0.21"/><rect x="16" y="76" width="4" height="4" fill-opacity="0.18"/><rect x="20" y="76" width="4" height="4" fill-opacity="0.10"/><rect x="24" y="76" width="4" height="4" fill-opacity="0.11"/><rect x="28" y="76" width="4" height="4" fill-opacity="0.18"/><rect x="32" y="76" width="4" height="4" fill-opacity="0.09"/><rect x="36" y="76" width="4" height="4" fill-opacity="0.11"/><rect x="40" y="76" width="4" height="4" fill-opacity="0.15"/><rect x="44" y="76" width="4" height="4" fill-opacity="0.22"/><rect x="48" y="76" width="4" height="4" fill-opacity="0.08"/><rect x="52" y="76" width="4" height="4" fill-opacity="0.18"/><rect x="56" y="76" width="4" height="4" fill-opacity="0.16"/><rect x="60" y="76" width="4" height="4" fill-opacity="0.14"/><rect x="64" y="76" width="4" height="4" fill-opacity="0.09"/><rect x="68" y="76" width="4" height="4" fill-opacity="0.08"/></pattern>
<pattern id="nz2" patternUnits="userSpaceOnUse" x="1186" y="306" width="68" height="68"><rect x="4" y="0" width="4" height="4" fill-opacity="0.12"/><rect x="8" y="0" width="4" height="4" fill-opacity="0.04"/><rect x="20" y="0" width="4" height="4" fill-opacity="0.13"/><rect x="24" y="0" width="4" height="4" fill-opacity="0.14"/><rect x="28" y="0" width="4" height="4" fill-opacity="0.11"/><rect x="32" y="0" width="4" height="4" fill-opacity="0.05"/><rect x="36" y="0" width="4" height="4" fill-opacity="0.04"/><rect x="40" y="0" width="4" height="4" fill-opacity="0.05"/><rect x="44" y="0" width="4" height="4" fill-opacity="0.07"/><rect x="52" y="0" width="4" height="4" fill-opacity="0.07"/><rect x="56" y="0" width="4" height="4" fill-opacity="0.04"/><rect x="60" y="0" width="4" height="4" fill-opacity="0.15"/><rect x="64" y="0" width="4" height="4" fill-opacity="0.16"/><rect x="0" y="4" width="4" height="4" fill-opacity="0.09"/><rect x="4" y="4" width="4" height="4" fill-opacity="0.04"/><rect x="8" y="4" width="4" height="4" fill-opacity="0.15"/><rect x="12" y="4" width="4" height="4" fill-opacity="0.05"/><rect x="16" y="4" width="4" height="4" fill-opacity="0.06"/><rect x="24" y="4" width="4" height="4" fill-opacity="0.06"/><rect x="28" y="4" width="4" height="4" fill-opacity="0.08"/><rect x="32" y="4" width="4" height="4" fill-opacity="0.08"/><rect x="36" y="4" width="4" height="4" fill-opacity="0.03"/><rect x="40" y="4" width="4" height="4" fill-opacity="0.08"/><rect x="48" y="4" width="4" height="4" fill-opacity="0.04"/><rect x="56" y="4" width="4" height="4" fill-opacity="0.06"/><rect x="0" y="8" width="4" height="4" fill-opacity="0.05"/><rect x="4" y="8" width="4" height="4" fill-opacity="0.04"/><rect x="8" y="8" width="4" height="4" fill-opacity="0.09"/><rect x="12" y="8" width="4" height="4" fill-opacity="0.08"/><rect x="16" y="8" width="4" height="4" fill-opacity="0.12"/><rect x="20" y="8" width="4" height="4" fill-opacity="0.11"/><rect x="24" y="8" width="4" height="4" fill-opacity="0.11"/><rect x="28" y="8" width="4" height="4" fill-opacity="0.14"/><rect x="32" y="8" width="4" height="4" fill-opacity="0.06"/><rect x="36" y="8" width="4" height="4" fill-opacity="0.05"/><rect x="40" y="8" width="4" height="4" fill-opacity="0.16"/><rect x="48" y="8" width="4" height="4" fill-opacity="0.12"/><rect x="52" y="8" width="4" height="4" fill-opacity="0.10"/><rect x="60" y="8" width="4" height="4" fill-opacity="0.13"/><rect x="64" y="8" width="4" height="4" fill-opacity="0.14"/><rect x="0" y="12" width="4" height="4" fill-opacity="0.10"/><rect x="4" y="12" width="4" height="4" fill-opacity="0.12"/><rect x="8" y="12" width="4" height="4" fill-opacity="0.13"/><rect x="16" y="12" width="4" height="4" fill-opacity="0.08"/><rect x="20" y="12" width="4" height="4" fill-opacity="0.08"/><rect x="24" y="12" width="4" height="4" fill-opacity="0.13"/><rect x="28" y="12" width="4" height="4" fill-opacity="0.13"/><rect x="32" y="12" width="4" height="4" fill-opacity="0.13"/><rect x="36" y="12" width="4" height="4" fill-opacity="0.09"/><rect x="40" y="12" width="4" height="4" fill-opacity="0.14"/><rect x="44" y="12" width="4" height="4" fill-opacity="0.11"/><rect x="48" y="12" width="4" height="4" fill-opacity="0.11"/><rect x="52" y="12" width="4" height="4" fill-opacity="0.04"/><rect x="64" y="12" width="4" height="4" fill-opacity="0.06"/><rect x="4" y="16" width="4" height="4" fill-opacity="0.13"/><rect x="8" y="16" width="4" height="4" fill-opacity="0.09"/><rect x="12" y="16" width="4" height="4" fill-opacity="0.10"/><rect x="16" y="16" width="4" height="4" fill-opacity="0.10"/><rect x="20" y="16" width="4" height="4" fill-opacity="0.11"/><rect x="24" y="16" width="4" height="4" fill-opacity="0.08"/><rect x="32" y="16" width="4" height="4" fill-opacity="0.13"/><rect x="36" y="16" width="4" height="4" fill-opacity="0.12"/><rect x="40" y="16" width="4" height="4" fill-opacity="0.08"/><rect x="44" y="16" width="4" height="4" fill-opacity="0.09"/><rect x="48" y="16" width="4" height="4" fill-opacity="0.11"/><rect x="56" y="16" width="4" height="4" fill-opacity="0.12"/><rect x="60" y="16" width="4" height="4" fill-opacity="0.04"/><rect x="0" y="20" width="4" height="4" fill-opacity="0.04"/><rect x="4" y="20" width="4" height="4" fill-opacity="0.12"/><rect x="8" y="20" width="4" height="4" fill-opacity="0.03"/><rect x="12" y="20" width="4" height="4" fill-opacity="0.12"/><rect x="16" y="20" width="4" height="4" fill-opacity="0.16"/><rect x="20" y="20" width="4" height="4" fill-opacity="0.08"/><rect x="24" y="20" width="4" height="4" fill-opacity="0.06"/><rect x="28" y="20" width="4" height="4" fill-opacity="0.08"/><rect x="32" y="20" width="4" height="4" fill-opacity="0.11"/><rect x="36" y="20" width="4" height="4" fill-opacity="0.12"/><rect x="40" y="20" width="4" height="4" fill-opacity="0.10"/><rect x="44" y="20" width="4" height="4" fill-opacity="0.10"/><rect x="56" y="20" width="4" height="4" fill-opacity="0.04"/><rect x="60" y="20" width="4" height="4" fill-opacity="0.12"/><rect x="64" y="20" width="4" height="4" fill-opacity="0.05"/><rect x="0" y="24" width="4" height="4" fill-opacity="0.09"/><rect x="12" y="24" width="4" height="4" fill-opacity="0.04"/><rect x="16" y="24" width="4" height="4" fill-opacity="0.11"/><rect x="20" y="24" width="4" height="4" fill-opacity="0.11"/><rect x="24" y="24" width="4" height="4" fill-opacity="0.11"/><rect x="28" y="24" width="4" height="4" fill-opacity="0.05"/><rect x="32" y="24" width="4" height="4" fill-opacity="0.08"/><rect x="36" y="24" width="4" height="4" fill-opacity="0.07"/><rect x="40" y="24" width="4" height="4" fill-opacity="0.07"/><rect x="48" y="24" width="4" height="4" fill-opacity="0.14"/><rect x="52" y="24" width="4" height="4" fill-opacity="0.03"/><rect x="56" y="24" width="4" height="4" fill-opacity="0.16"/><rect x="60" y="24" width="4" height="4" fill-opacity="0.15"/><rect x="0" y="28" width="4" height="4" fill-opacity="0.07"/><rect x="4" y="28" width="4" height="4" fill-opacity="0.13"/><rect x="8" y="28" width="4" height="4" fill-opacity="0.15"/><rect x="12" y="28" width="4" height="4" fill-opacity="0.07"/><rect x="16" y="28" width="4" height="4" fill-opacity="0.04"/><rect x="20" y="28" width="4" height="4" fill-opacity="0.03"/><rect x="24" y="28" width="4" height="4" fill-opacity="0.15"/><rect x="28" y="28" width="4" height="4" fill-opacity="0.03"/><rect x="32" y="28" width="4" height="4" fill-opacity="0.09"/><rect x="40" y="28" width="4" height="4" fill-opacity="0.08"/><rect x="44" y="28" width="4" height="4" fill-opacity="0.15"/><rect x="52" y="28" width="4" height="4" fill-opacity="0.13"/><rect x="56" y="28" width="4" height="4" fill-opacity="0.08"/><rect x="60" y="28" width="4" height="4" fill-opacity="0.14"/><rect x="64" y="28" width="4" height="4" fill-opacity="0.11"/><rect x="0" y="32" width="4" height="4" fill-opacity="0.04"/><rect x="4" y="32" width="4" height="4" fill-opacity="0.14"/><rect x="8" y="32" width="4" height="4" fill-opacity="0.08"/><rect x="20" y="32" width="4" height="4" fill-opacity="0.08"/><rect x="24" y="32" width="4" height="4" fill-opacity="0.07"/><rect x="28" y="32" width="4" height="4" fill-opacity="0.05"/><rect x="36" y="32" width="4" height="4" fill-opacity="0.06"/><rect x="40" y="32" width="4" height="4" fill-opacity="0.05"/><rect x="44" y="32" width="4" height="4" fill-opacity="0.13"/><rect x="52" y="32" width="4" height="4" fill-opacity="0.12"/><rect x="56" y="32" width="4" height="4" fill-opacity="0.13"/><rect x="64" y="32" width="4" height="4" fill-opacity="0.15"/><rect x="0" y="36" width="4" height="4" fill-opacity="0.11"/><rect x="4" y="36" width="4" height="4" fill-opacity="0.14"/><rect x="8" y="36" width="4" height="4" fill-opacity="0.05"/><rect x="12" y="36" width="4" height="4" fill-opacity="0.06"/><rect x="16" y="36" width="4" height="4" fill-opacity="0.06"/><rect x="20" y="36" width="4" height="4" fill-opacity="0.16"/><rect x="24" y="36" width="4" height="4" fill-opacity="0.09"/><rect x="28" y="36" width="4" height="4" fill-opacity="0.06"/><rect x="32" y="36" width="4" height="4" fill-opacity="0.07"/><rect x="36" y="36" width="4" height="4" fill-opacity="0.04"/><rect x="48" y="36" width="4" height="4" fill-opacity="0.13"/><rect x="52" y="36" width="4" height="4" fill-opacity="0.05"/><rect x="56" y="36" width="4" height="4" fill-opacity="0.15"/><rect x="60" y="36" width="4" height="4" fill-opacity="0.04"/><rect x="64" y="36" width="4" height="4" fill-opacity="0.04"/><rect x="0" y="40" width="4" height="4" fill-opacity="0.08"/><rect x="4" y="40" width="4" height="4" fill-opacity="0.03"/><rect x="8" y="40" width="4" height="4" fill-opacity="0.06"/><rect x="12" y="40" width="4" height="4" fill-opacity="0.15"/><rect x="16" y="40" width="4" height="4" fill-opacity="0.14"/><rect x="20" y="40" width="4" height="4" fill-opacity="0.13"/><rect x="24" y="40" width="4" height="4" fill-opacity="0.10"/><rect x="28" y="40" width="4" height="4" fill-opacity="0.15"/><rect x="32" y="40" width="4" height="4" fill-opacity="0.15"/><rect x="36" y="40" width="4" height="4" fill-opacity="0.09"/><rect x="40" y="40" width="4" height="4" fill-opacity="0.12"/><rect x="48" y="40" width="4" height="4" fill-opacity="0.12"/><rect x="52" y="40" width="4" height="4" fill-opacity="0.07"/><rect x="56" y="40" width="4" height="4" fill-opacity="0.12"/><rect x="60" y="40" width="4" height="4" fill-opacity="0.10"/><rect x="64" y="40" width="4" height="4" fill-opacity="0.05"/><rect x="4" y="44" width="4" height="4" fill-opacity="0.15"/><rect x="12" y="44" width="4" height="4" fill-opacity="0.08"/><rect x="16" y="44" width="4" height="4" fill-opacity="0.05"/><rect x="20" y="44" width="4" height="4" fill-opacity="0.05"/><rect x="24" y="44" width="4" height="4" fill-opacity="0.12"/><rect x="28" y="44" width="4" height="4" fill-opacity="0.16"/><rect x="32" y="44" width="4" height="4" fill-opacity="0.04"/><rect x="36" y="44" width="4" height="4" fill-opacity="0.10"/><rect x="40" y="44" width="4" height="4" fill-opacity="0.05"/><rect x="44" y="44" width="4" height="4" fill-opacity="0.09"/><rect x="48" y="44" width="4" height="4" fill-opacity="0.06"/><rect x="60" y="44" width="4" height="4" fill-opacity="0.03"/><rect x="64" y="44" width="4" height="4" fill-opacity="0.14"/><rect x="0" y="48" width="4" height="4" fill-opacity="0.08"/><rect x="4" y="48" width="4" height="4" fill-opacity="0.04"/><rect x="8" y="48" width="4" height="4" fill-opacity="0.15"/><rect x="12" y="48" width="4" height="4" fill-opacity="0.16"/><rect x="16" y="48" width="4" height="4" fill-opacity="0.07"/><rect x="24" y="48" width="4" height="4" fill-opacity="0.03"/><rect x="32" y="48" width="4" height="4" fill-opacity="0.05"/><rect x="40" y="48" width="4" height="4" fill-opacity="0.04"/><rect x="44" y="48" width="4" height="4" fill-opacity="0.04"/><rect x="48" y="48" width="4" height="4" fill-opacity="0.09"/><rect x="52" y="48" width="4" height="4" fill-opacity="0.14"/><rect x="56" y="48" width="4" height="4" fill-opacity="0.12"/><rect x="60" y="48" width="4" height="4" fill-opacity="0.07"/><rect x="64" y="48" width="4" height="4" fill-opacity="0.07"/><rect x="0" y="52" width="4" height="4" fill-opacity="0.08"/><rect x="4" y="52" width="4" height="4" fill-opacity="0.06"/><rect x="8" y="52" width="4" height="4" fill-opacity="0.05"/><rect x="16" y="52" width="4" height="4" fill-opacity="0.04"/><rect x="20" y="52" width="4" height="4" fill-opacity="0.15"/><rect x="28" y="52" width="4" height="4" fill-opacity="0.08"/><rect x="32" y="52" width="4" height="4" fill-opacity="0.10"/><rect x="36" y="52" width="4" height="4" fill-opacity="0.14"/><rect x="40" y="52" width="4" height="4" fill-opacity="0.03"/><rect x="44" y="52" width="4" height="4" fill-opacity="0.04"/><rect x="48" y="52" width="4" height="4" fill-opacity="0.04"/><rect x="52" y="52" width="4" height="4" fill-opacity="0.06"/><rect x="56" y="52" width="4" height="4" fill-opacity="0.07"/><rect x="60" y="52" width="4" height="4" fill-opacity="0.15"/><rect x="64" y="52" width="4" height="4" fill-opacity="0.14"/><rect x="0" y="56" width="4" height="4" fill-opacity="0.14"/><rect x="12" y="56" width="4" height="4" fill-opacity="0.11"/><rect x="16" y="56" width="4" height="4" fill-opacity="0.14"/><rect x="20" y="56" width="4" height="4" fill-opacity="0.08"/><rect x="24" y="56" width="4" height="4" fill-opacity="0.09"/><rect x="32" y="56" width="4" height="4" fill-opacity="0.06"/><rect x="36" y="56" width="4" height="4" fill-opacity="0.15"/><rect x="40" y="56" width="4" height="4" fill-opacity="0.13"/><rect x="44" y="56" width="4" height="4" fill-opacity="0.14"/><rect x="48" y="56" width="4" height="4" fill-opacity="0.16"/><rect x="52" y="56" width="4" height="4" fill-opacity="0.04"/><rect x="64" y="56" width="4" height="4" fill-opacity="0.08"/><rect x="0" y="60" width="4" height="4" fill-opacity="0.11"/><rect x="4" y="60" width="4" height="4" fill-opacity="0.15"/><rect x="8" y="60" width="4" height="4" fill-opacity="0.12"/><rect x="12" y="60" width="4" height="4" fill-opacity="0.10"/><rect x="16" y="60" width="4" height="4" fill-opacity="0.12"/><rect x="20" y="60" width="4" height="4" fill-opacity="0.07"/><rect x="24" y="60" width="4" height="4" fill-opacity="0.09"/><rect x="32" y="60" width="4" height="4" fill-opacity="0.13"/><rect x="36" y="60" width="4" height="4" fill-opacity="0.04"/><rect x="40" y="60" width="4" height="4" fill-opacity="0.15"/><rect x="44" y="60" width="4" height="4" fill-opacity="0.10"/><rect x="48" y="60" width="4" height="4" fill-opacity="0.05"/><rect x="56" y="60" width="4" height="4" fill-opacity="0.04"/><rect x="60" y="60" width="4" height="4" fill-opacity="0.10"/><rect x="64" y="60" width="4" height="4" fill-opacity="0.11"/><rect x="8" y="64" width="4" height="4" fill-opacity="0.08"/><rect x="12" y="64" width="4" height="4" fill-opacity="0.09"/><rect x="16" y="64" width="4" height="4" fill-opacity="0.06"/><rect x="20" y="64" width="4" height="4" fill-opacity="0.04"/><rect x="24" y="64" width="4" height="4" fill-opacity="0.10"/><rect x="32" y="64" width="4" height="4" fill-opacity="0.05"/><rect x="36" y="64" width="4" height="4" fill-opacity="0.07"/><rect x="40" y="64" width="4" height="4" fill-opacity="0.15"/><rect x="44" y="64" width="4" height="4" fill-opacity="0.10"/><rect x="48" y="64" width="4" height="4" fill-opacity="0.14"/><rect x="52" y="64" width="4" height="4" fill-opacity="0.08"/><rect x="56" y="64" width="4" height="4" fill-opacity="0.04"/><rect x="60" y="64" width="4" height="4" fill-opacity="0.04"/><rect x="64" y="64" width="4" height="4" fill-opacity="0.15"/></pattern>
<filter id="mb" x="-10%" y="-10%" width="120%" height="120%"><feGaussianBlur stdDeviation="6"/></filter>
<mask id="bm" maskUnits="userSpaceOnUse" x="1100" y="220" width="1150" height="1100"><path d="M1197 315 L2148 307 L2146 1223 L1200 1218 Z" fill="#fff" filter="url(#mb)"/></mask>
</defs>
<g filter="url(#cm)">
<rect x="807" y="88" width="1753" height="1379" fill="#000"/>
<g filter="url(#gb2)"><path d="M1197 315 L2148 307 L2146 1223 L1200 1218 Z" fill="#fff" fill-opacity="0.10"/></g>
<g mask="url(#bm)">
<rect x="1150" y="260" width="1050" height="1010" fill="#fff" fill-opacity="0.11"/>
<g filter="url(#gb)">
<rect x="1160" y="280" width="225" height="220" rx="60" fill="#fff" fill-opacity="0.27"/>
<rect x="1960" y="270" width="230" height="228" rx="60" fill="#fff" fill-opacity="0.26"/>
<rect x="1165" y="1045" width="225" height="220" rx="60" fill="#fff" fill-opacity="0.26"/>
<rect x="1965" y="1050" width="230" height="215" rx="60" fill="#fff" fill-opacity="0.28"/>
<rect x="1160" y="280" width="130" height="300" rx="40" fill="#fff" fill-opacity="0.12"/>
<rect x="2060" y="270" width="130" height="300" rx="40" fill="#fff" fill-opacity="0.11"/>
<rect x="1165" y="970" width="130" height="295" rx="40" fill="#fff" fill-opacity="0.11"/>
<rect x="2060" y="975" width="130" height="290" rx="40" fill="#fff" fill-opacity="0.12"/>
<rect x="1150" y="330" width="115" height="860" rx="30" fill="#fff" fill-opacity="0.09"/>
<rect x="2070" y="330" width="120" height="860" rx="30" fill="#fff" fill-opacity="0.09"/>
<rect x="1220" y="270" width="900" height="95" rx="30" fill="#fff" fill-opacity="0.08"/>
<rect x="1220" y="1160" width="900" height="100" rx="30" fill="#fff" fill-opacity="0.07"/>
</g>
<g filter="url(#gb2)">
<ellipse cx="1275" cy="375" rx="70" ry="55" fill="#fff" fill-opacity="0.22"/>
<ellipse cx="2090" cy="365" rx="60" ry="55" fill="#fff" fill-opacity="0.22"/>
<ellipse cx="1262" cy="1165" rx="65" ry="55" fill="#fff" fill-opacity="0.22"/>
<ellipse cx="2092" cy="1172" rx="60" ry="55" fill="#fff" fill-opacity="0.25"/>
</g>
<circle cx="1637.9" cy="721.9" r="40.0" fill="url(#g)" opacity="0.31"/>
<circle cx="1637.0" cy="651.7" r="39.8" fill="url(#g)" opacity="0.32"/>
<circle cx="1635.3" cy="584.6" r="39.1" fill="url(#g)" opacity="0.32"/>
<circle cx="1633.3" cy="526.6" r="37.8" fill="url(#g)" opacity="0.33"/>
<circle cx="1630.8" cy="471.6" r="35.9" fill="url(#g)" opacity="0.34"/>
<circle cx="1628.0" cy="419.7" r="33.3" fill="url(#g)" opacity="0.35"/>
<circle cx="1625.0" cy="371.8" r="30.0" fill="url(#g)" opacity="0.35"/>
<circle cx="1621.6" cy="325.0" r="26.0" fill="url(#g)" opacity="0.36"/>
<circle cx="1567.7" cy="721.0" r="39.8" fill="url(#g)" opacity="0.32"/>
<circle cx="1565.7" cy="649.7" r="39.8" fill="url(#g)" opacity="0.32"/>
<circle cx="1561.9" cy="582.0" r="39.0" fill="url(#g)" opacity="0.32"/>
<circle cx="1557.3" cy="523.9" r="37.7" fill="url(#g)" opacity="0.33"/>
<circle cx="1551.7" cy="469.2" r="35.8" fill="url(#g)" opacity="0.34"/>
<circle cx="1545.3" cy="417.9" r="33.2" fill="url(#g)" opacity="0.35"/>
<circle cx="1538.5" cy="370.8" r="30.0" fill="url(#g)" opacity="0.36"/>
<circle cx="1531.0" cy="325.0" r="26.0" fill="url(#g)" opacity="0.37"/>
<circle cx="1500.6" cy="719.3" r="39.1" fill="url(#g)" opacity="0.32"/>
<circle cx="1498.0" cy="645.9" r="39.0" fill="url(#g)" opacity="0.32"/>
<circle cx="1493.2" cy="577.2" r="38.9" fill="url(#g)" opacity="0.33"/>
<circle cx="1487.3" cy="519.0" r="37.6" fill="url(#g)" opacity="0.34"/>
<circle cx="1480.1" cy="464.8" r="35.6" fill="url(#g)" opacity="0.36"/>
<circle cx="1472.0" cy="414.5" r="33.0" fill="url(#g)" opacity="0.38"/>
<circle cx="1463.3" cy="368.9" r="29.8" fill="url(#g)" opacity="0.41"/>
<circle cx="1453.6" cy="325.0" r="26.0" fill="url(#g)" opacity="0.43"/>
<circle cx="1442.6" cy="717.3" r="37.8" fill="url(#g)" opacity="0.33"/>
<circle cx="1439.9" cy="641.3" r="37.7" fill="url(#g)" opacity="0.33"/>
<circle cx="1435.0" cy="571.3" r="37.6" fill="url(#g)" opacity="0.34"/>
<circle cx="1428.9" cy="512.9" r="37.4" fill="url(#g)" opacity="0.36"/>
<circle cx="1421.5" cy="459.3" r="35.3" fill="url(#g)" opacity="0.41"/>
<circle cx="1413.1" cy="410.3" r="32.7" fill="url(#g)" opacity="0.47"/>
<circle cx="1404.1" cy="366.5" r="29.6" fill="url(#g)" opacity="0.52"/>
<circle cx="1394.1" cy="325.0" r="26.0" fill="url(#g)" opacity="0.55"/>
<circle cx="1387.6" cy="714.8" r="35.9" fill="url(#g)" opacity="0.34"/>
<circle cx="1385.2" cy="635.7" r="35.8" fill="url(#g)" opacity="0.34"/>
<circle cx="1380.8" cy="564.1" r="35.6" fill="url(#g)" opacity="0.36"/>
<circle cx="1375.3" cy="505.5" r="35.3" fill="url(#g)" opacity="0.41"/>
<circle cx="1368.7" cy="452.7" r="35.0" fill="url(#g)" opacity="0.50"/>
<circle cx="1361.1" cy="405.3" r="32.4" fill="url(#g)" opacity="0.60"/>
<circle cx="1353.0" cy="363.7" r="29.4" fill="url(#g)" opacity="0.67"/>
<circle cx="1344.1" cy="325.0" r="26.0" fill="url(#g)" opacity="0.70"/>
<circle cx="1335.7" cy="712.0" r="33.3" fill="url(#g)" opacity="0.35"/>
<circle cx="1333.9" cy="629.3" r="33.2" fill="url(#g)" opacity="0.35"/>
<circle cx="1330.5" cy="556.0" r="33.0" fill="url(#g)" opacity="0.39"/>
<circle cx="1326.3" cy="497.1" r="32.7" fill="url(#g)" opacity="0.49"/>
<circle cx="1321.3" cy="445.1" r="32.4" fill="url(#g)" opacity="0.62"/>
<circle cx="1315.5" cy="399.5" r="32.0" fill="url(#g)" opacity="0.74"/>
<circle cx="1309.4" cy="360.4" r="29.1" fill="url(#g)" opacity="0.81"/>
<circle cx="1302.5" cy="325.0" r="26.0" fill="url(#g)" opacity="0.82"/>
<circle cx="1287.8" cy="709.0" r="30.0" fill="url(#g)" opacity="0.35"/>
<circle cx="1286.8" cy="622.5" r="30.0" fill="url(#g)" opacity="0.37"/>
<circle cx="1284.9" cy="547.3" r="29.8" fill="url(#g)" opacity="0.43"/>
<circle cx="1282.5" cy="488.1" r="29.6" fill="url(#g)" opacity="0.55"/>
<circle cx="1279.7" cy="437.0" r="29.4" fill="url(#g)" opacity="0.71"/>
<circle cx="1276.4" cy="393.4" r="29.1" fill="url(#g)" opacity="0.84"/>
<circle cx="1273.0" cy="357.0" r="28.9" fill="url(#g)" opacity="0.89"/>
<circle cx="1269.1" cy="325.0" r="26.0" fill="url(#g)" opacity="0.88"/>
<circle cx="1241.0" cy="705.6" r="26.0" fill="url(#g)" opacity="0.36"/>
<circle cx="1241.0" cy="615.0" r="26.0" fill="url(#g)" opacity="0.38"/>
<circle cx="1241.0" cy="537.6" r="26.0" fill="url(#g)" opacity="0.45"/>
<circle cx="1241.0" cy="478.1" r="26.0" fill="url(#g)" opacity="0.60"/>
<circle cx="1241.0" cy="428.1" r="26.0" fill="url(#g)" opacity="0.76"/>
<circle cx="1241.0" cy="386.5" r="26.0" fill="url(#g)" opacity="0.87"/>
<circle cx="1241.0" cy="353.1" r="26.0" fill="url(#g)" opacity="0.90"/>
<circle cx="1241.0" cy="325.0" r="26.0" fill="url(#g)" opacity="0.89"/>
<circle cx="1637.9" cy="802.1" r="40.0" fill="url(#g)" opacity="0.31"/>
<circle cx="1637.0" cy="872.3" r="39.8" fill="url(#g)" opacity="0.32"/>
<circle cx="1635.3" cy="939.4" r="39.1" fill="url(#g)" opacity="0.32"/>
<circle cx="1633.3" cy="997.4" r="37.8" fill="url(#g)" opacity="0.33"/>
<circle cx="1630.8" cy="1052.4" r="35.9" fill="url(#g)" opacity="0.34"/>
<circle cx="1628.0" cy="1104.3" r="33.3" fill="url(#g)" opacity="0.35"/>
<circle cx="1625.0" cy="1152.2" r="30.0" fill="url(#g)" opacity="0.35"/>
<circle cx="1621.6" cy="1199.0" r="26.0" fill="url(#g)" opacity="0.36"/>
<circle cx="1567.7" cy="803.0" r="39.8" fill="url(#g)" opacity="0.32"/>
<circle cx="1565.7" cy="874.3" r="39.8" fill="url(#g)" opacity="0.32"/>
<circle cx="1561.9" cy="942.0" r="39.0" fill="url(#g)" opacity="0.32"/>
<circle cx="1557.3" cy="1000.1" r="37.7" fill="url(#g)" opacity="0.33"/>
<circle cx="1551.7" cy="1054.8" r="35.8" fill="url(#g)" opacity="0.34"/>
<circle cx="1545.3" cy="1106.1" r="33.2" fill="url(#g)" opacity="0.35"/>
<circle cx="1538.5" cy="1153.2" r="30.0" fill="url(#g)" opacity="0.36"/>
<circle cx="1531.0" cy="1199.0" r="26.0" fill="url(#g)" opacity="0.37"/>
<circle cx="1500.6" cy="804.7" r="39.1" fill="url(#g)" opacity="0.32"/>
<circle cx="1498.0" cy="878.1" r="39.0" fill="url(#g)" opacity="0.32"/>
<circle cx="1493.2" cy="946.8" r="38.9" fill="url(#g)" opacity="0.33"/>
<circle cx="1487.3" cy="1005.0" r="37.6" fill="url(#g)" opacity="0.34"/>
<circle cx="1480.1" cy="1059.2" r="35.6" fill="url(#g)" opacity="0.35"/>
<circle cx="1472.0" cy="1109.5" r="33.0" fill="url(#g)" opacity="0.38"/>
<circle cx="1463.3" cy="1155.1" r="29.8" fill="url(#g)" opacity="0.40"/>
<circle cx="1453.6" cy="1199.0" r="26.0" fill="url(#g)" opacity="0.42"/>
<circle cx="1442.6" cy="806.7" r="37.8" fill="url(#g)" opacity="0.33"/>
<circle cx="1439.9" cy="882.7" r="37.7" fill="url(#g)" opacity="0.33"/>
<circle cx="1435.0" cy="952.7" r="37.6" fill="url(#g)" opacity="0.34"/>
<circle cx="1428.9" cy="1011.1" r="37.4" fill="url(#g)" opacity="0.35"/>
<circle cx="1421.5" cy="1064.7" r="35.3" fill="url(#g)" opacity="0.39"/>
<circle cx="1413.1" cy="1113.7" r="32.7" fill="url(#g)" opacity="0.45"/>
<circle cx="1404.1" cy="1157.5" r="29.6" fill="url(#g)" opacity="0.50"/>
<circle cx="1394.1" cy="1199.0" r="26.0" fill="url(#g)" opacity="0.54"/>
<circle cx="1387.6" cy="809.2" r="35.9" fill="url(#g)" opacity="0.34"/>
<circle cx="1385.2" cy="888.3" r="35.8" fill="url(#g)" opacity="0.34"/>
<circle cx="1380.8" cy="959.9" r="35.6" fill="url(#g)" opacity="0.36"/>
<circle cx="1375.3" cy="1018.5" r="35.3" fill="url(#g)" opacity="0.39"/>
<circle cx="1368.7" cy="1071.3" r="35.0" fill="url(#g)" opacity="0.47"/>
<circle cx="1361.1" cy="1118.7" r="32.4" fill="url(#g)" opacity="0.56"/>
<circle cx="1353.0" cy="1160.3" r="29.4" fill="url(#g)" opacity="0.65"/>
<circle cx="1344.1" cy="1199.0" r="26.0" fill="url(#g)" opacity="0.70"/>
<circle cx="1335.7" cy="812.0" r="33.3" fill="url(#g)" opacity="0.35"/>
<circle cx="1333.9" cy="894.7" r="33.2" fill="url(#g)" opacity="0.35"/>
<circle cx="1330.5" cy="968.0" r="33.0" fill="url(#g)" opacity="0.38"/>
<circle cx="1326.3" cy="1026.9" r="32.7" fill="url(#g)" opacity="0.45"/>
<circle cx="1321.3" cy="1078.9" r="32.4" fill="url(#g)" opacity="0.57"/>
<circle cx="1315.5" cy="1124.5" r="32.0" fill="url(#g)" opacity="0.69"/>
<circle cx="1309.4" cy="1163.6" r="29.1" fill="url(#g)" opacity="0.79"/>
<circle cx="1302.5" cy="1199.0" r="26.0" fill="url(#g)" opacity="0.82"/>
<circle cx="1287.8" cy="815.0" r="30.0" fill="url(#g)" opacity="0.35"/>
<circle cx="1286.8" cy="901.5" r="30.0" fill="url(#g)" opacity="0.36"/>
<circle cx="1284.9" cy="976.7" r="29.8" fill="url(#g)" opacity="0.41"/>
<circle cx="1282.5" cy="1035.9" r="29.6" fill="url(#g)" opacity="0.51"/>
<circle cx="1279.7" cy="1087.0" r="29.4" fill="url(#g)" opacity="0.66"/>
<circle cx="1276.4" cy="1130.6" r="29.1" fill="url(#g)" opacity="0.79"/>
<circle cx="1273.0" cy="1167.0" r="28.9" fill="url(#g)" opacity="0.87"/>
<circle cx="1269.1" cy="1199.0" r="26.0" fill="url(#g)" opacity="0.89"/>
<circle cx="1241.0" cy="818.4" r="26.0" fill="url(#g)" opacity="0.36"/>
<circle cx="1241.0" cy="909.0" r="26.0" fill="url(#g)" opacity="0.37"/>
<circle cx="1241.0" cy="986.4" r="26.0" fill="url(#g)" opacity="0.43"/>
<circle cx="1241.0" cy="1045.9" r="26.0" fill="url(#g)" opacity="0.55"/>
<circle cx="1241.0" cy="1095.9" r="26.0" fill="url(#g)" opacity="0.71"/>
<circle cx="1241.0" cy="1137.5" r="26.0" fill="url(#g)" opacity="0.84"/>
<circle cx="1241.0" cy="1170.9" r="26.0" fill="url(#g)" opacity="0.90"/>
<circle cx="1241.0" cy="1199.0" r="26.0" fill="url(#g)" opacity="0.90"/>
<circle cx="1718.1" cy="721.9" r="40.0" fill="url(#g)" opacity="0.31"/>
<circle cx="1719.0" cy="651.7" r="39.8" fill="url(#g)" opacity="0.32"/>
<circle cx="1720.7" cy="584.6" r="39.1" fill="url(#g)" opacity="0.32"/>
<circle cx="1722.7" cy="526.6" r="37.8" fill="url(#g)" opacity="0.33"/>
<circle cx="1725.2" cy="471.6" r="35.9" fill="url(#g)" opacity="0.34"/>
<circle cx="1728.0" cy="419.7" r="33.3" fill="url(#g)" opacity="0.35"/>
<circle cx="1731.0" cy="371.8" r="30.0" fill="url(#g)" opacity="0.35"/>
<circle cx="1734.4" cy="325.0" r="26.0" fill="url(#g)" opacity="0.36"/>
<circle cx="1788.3" cy="721.0" r="39.8" fill="url(#g)" opacity="0.32"/>
<circle cx="1790.3" cy="649.7" r="39.8" fill="url(#g)" opacity="0.32"/>
<circle cx="1794.1" cy="582.0" r="39.0" fill="url(#g)" opacity="0.32"/>
<circle cx="1798.7" cy="523.9" r="37.7" fill="url(#g)" opacity="0.33"/>
<circle cx="1804.3" cy="469.2" r="35.8" fill="url(#g)" opacity="0.34"/>
<circle cx="1810.7" cy="417.9" r="33.2" fill="url(#g)" opacity="0.35"/>
<circle cx="1817.5" cy="370.8" r="30.0" fill="url(#g)" opacity="0.36"/>
<circle cx="1825.0" cy="325.0" r="26.0" fill="url(#g)" opacity="0.37"/>
<circle cx="1855.4" cy="719.3" r="39.1" fill="url(#g)" opacity="0.32"/>
<circle cx="1858.0" cy="645.9" r="39.0" fill="url(#g)" opacity="0.32"/>
<circle cx="1862.8" cy="577.2" r="38.9" fill="url(#g)" opacity="0.33"/>
<circle cx="1868.7" cy="519.0" r="37.6" fill="url(#g)" opacity="0.34"/>
<circle cx="1875.9" cy="464.8" r="35.6" fill="url(#g)" opacity="0.36"/>
<circle cx="1884.0" cy="414.5" r="33.0" fill="url(#g)" opacity="0.38"/>
<circle cx="1892.7" cy="368.9" r="29.8" fill="url(#g)" opacity="0.40"/>
<circle cx="1902.4" cy="325.0" r="26.0" fill="url(#g)" opacity="0.42"/>
<circle cx="1913.4" cy="717.3" r="37.8" fill="url(#g)" opacity="0.33"/>
<circle cx="1916.1" cy="641.3" r="37.7" fill="url(#g)" opacity="0.33"/>
<circle cx="1921.0" cy="571.3" r="37.6" fill="url(#g)" opacity="0.34"/>
<circle cx="1927.1" cy="512.9" r="37.4" fill="url(#g)" opacity="0.36"/>
<circle cx="1934.5" cy="459.3" r="35.3" fill="url(#g)" opacity="0.40"/>
<circle cx="1942.9" cy="410.3" r="32.7" fill="url(#g)" opacity="0.46"/>
<circle cx="1951.9" cy="366.5" r="29.6" fill="url(#g)" opacity="0.51"/>
<circle cx="1961.9" cy="325.0" r="26.0" fill="url(#g)" opacity="0.54"/>
<circle cx="1968.4" cy="714.8" r="35.9" fill="url(#g)" opacity="0.34"/>
<circle cx="1970.8" cy="635.7" r="35.8" fill="url(#g)" opacity="0.34"/>
<circle cx="1975.2" cy="564.1" r="35.6" fill="url(#g)" opacity="0.36"/>
<circle cx="1980.7" cy="505.5" r="35.3" fill="url(#g)" opacity="0.41"/>
<circle cx="1987.3" cy="452.7" r="35.0" fill="url(#g)" opacity="0.48"/>
<circle cx="1994.9" cy="405.3" r="32.4" fill="url(#g)" opacity="0.58"/>
<circle cx="2003.0" cy="363.7" r="29.4" fill="url(#g)" opacity="0.66"/>
<circle cx="2011.9" cy="325.0" r="26.0" fill="url(#g)" opacity="0.69"/>
<circle cx="2020.3" cy="712.0" r="33.3" fill="url(#g)" opacity="0.35"/>
<circle cx="2022.1" cy="629.3" r="33.2" fill="url(#g)" opacity="0.35"/>
<circle cx="2025.5" cy="556.0" r="33.0" fill="url(#g)" opacity="0.39"/>
<circle cx="2029.7" cy="497.1" r="32.7" fill="url(#g)" opacity="0.47"/>
<circle cx="2034.7" cy="445.1" r="32.4" fill="url(#g)" opacity="0.60"/>
<circle cx="2040.5" cy="399.5" r="32.0" fill="url(#g)" opacity="0.72"/>
<circle cx="2046.6" cy="360.4" r="29.1" fill="url(#g)" opacity="0.80"/>
<circle cx="2053.5" cy="325.0" r="26.0" fill="url(#g)" opacity="0.82"/>
<circle cx="2068.2" cy="709.0" r="30.0" fill="url(#g)" opacity="0.35"/>
<circle cx="2069.2" cy="622.5" r="30.0" fill="url(#g)" opacity="0.36"/>
<circle cx="2071.1" cy="547.3" r="29.8" fill="url(#g)" opacity="0.42"/>
<circle cx="2073.5" cy="488.1" r="29.6" fill="url(#g)" opacity="0.54"/>
<circle cx="2076.3" cy="437.0" r="29.4" fill="url(#g)" opacity="0.69"/>
<circle cx="2079.6" cy="393.4" r="29.1" fill="url(#g)" opacity="0.82"/>
<circle cx="2083.0" cy="357.0" r="28.9" fill="url(#g)" opacity="0.88"/>
<circle cx="2086.9" cy="325.0" r="26.0" fill="url(#g)" opacity="0.88"/>
<circle cx="2115.0" cy="705.6" r="26.0" fill="url(#g)" opacity="0.36"/>
<circle cx="2115.0" cy="615.0" r="26.0" fill="url(#g)" opacity="0.37"/>
<circle cx="2115.0" cy="537.6" r="26.0" fill="url(#g)" opacity="0.45"/>
<circle cx="2115.0" cy="478.1" r="26.0" fill="url(#g)" opacity="0.59"/>
<circle cx="2115.0" cy="428.1" r="26.0" fill="url(#g)" opacity="0.75"/>
<circle cx="2115.0" cy="386.5" r="26.0" fill="url(#g)" opacity="0.86"/>
<circle cx="2115.0" cy="353.1" r="26.0" fill="url(#g)" opacity="0.90"/>
<circle cx="2115.0" cy="325.0" r="26.0" fill="url(#g)" opacity="0.90"/>
<circle cx="1718.1" cy="802.1" r="40.0" fill="url(#g)" opacity="0.31"/>
<circle cx="1719.0" cy="872.3" r="39.8" fill="url(#g)" opacity="0.32"/>
<circle cx="1720.7" cy="939.4" r="39.1" fill="url(#g)" opacity="0.32"/>
<circle cx="1722.7" cy="997.4" r="37.8" fill="url(#g)" opacity="0.33"/>
<circle cx="1725.2" cy="1052.4" r="35.9" fill="url(#g)" opacity="0.34"/>
<circle cx="1728.0" cy="1104.3" r="33.3" fill="url(#g)" opacity="0.35"/>
<circle cx="1731.0" cy="1152.2" r="30.0" fill="url(#g)" opacity="0.35"/>
<circle cx="1734.4" cy="1199.0" r="26.0" fill="url(#g)" opacity="0.36"/>
<circle cx="1788.3" cy="803.0" r="39.8" fill="url(#g)" opacity="0.32"/>
<circle cx="1790.3" cy="874.3" r="39.8" fill="url(#g)" opacity="0.32"/>
<circle cx="1794.1" cy="942.0" r="39.0" fill="url(#g)" opacity="0.32"/>
<circle cx="1798.7" cy="1000.1" r="37.7" fill="url(#g)" opacity="0.33"/>
<circle cx="1804.3" cy="1054.8" r="35.8" fill="url(#g)" opacity="0.34"/>
<circle cx="1810.7" cy="1106.1" r="33.2" fill="url(#g)" opacity="0.35"/>
<circle cx="1817.5" cy="1153.2" r="30.0" fill="url(#g)" opacity="0.36"/>
<circle cx="1825.0" cy="1199.0" r="26.0" fill="url(#g)" opacity="0.37"/>
<circle cx="1855.4" cy="804.7" r="39.1" fill="url(#g)" opacity="0.32"/>
<circle cx="1858.0" cy="878.1" r="39.0" fill="url(#g)" opacity="0.32"/>
<circle cx="1862.8" cy="946.8" r="38.9" fill="url(#g)" opacity="0.33"/>
<circle cx="1868.7" cy="1005.0" r="37.6" fill="url(#g)" opacity="0.34"/>
<circle cx="1875.9" cy="1059.2" r="35.6" fill="url(#g)" opacity="0.35"/>
<circle cx="1884.0" cy="1109.5" r="33.0" fill="url(#g)" opacity="0.38"/>
<circle cx="1892.7" cy="1155.1" r="29.8" fill="url(#g)" opacity="0.40"/>
<circle cx="1902.4" cy="1199.0" r="26.0" fill="url(#g)" opacity="0.42"/>
<circle cx="1913.4" cy="806.7" r="37.8" fill="url(#g)" opacity="0.33"/>
<circle cx="1916.1" cy="882.7" r="37.7" fill="url(#g)" opacity="0.33"/>
<circle cx="1921.0" cy="952.7" r="37.6" fill="url(#g)" opacity="0.34"/>
<circle cx="1927.1" cy="1011.1" r="37.4" fill="url(#g)" opacity="0.35"/>
<circle cx="1934.5" cy="1064.7" r="35.3" fill="url(#g)" opacity="0.39"/>
<circle cx="1942.9" cy="1113.7" r="32.7" fill="url(#g)" opacity="0.44"/>
<circle cx="1951.9" cy="1157.5" r="29.6" fill="url(#g)" opacity="0.50"/>
<circle cx="1961.9" cy="1199.0" r="26.0" fill="url(#g)" opacity="0.54"/>
<circle cx="1968.4" cy="809.2" r="35.9" fill="url(#g)" opacity="0.34"/>
<circle cx="1970.8" cy="888.3" r="35.8" fill="url(#g)" opacity="0.34"/>
<circle cx="1975.2" cy="959.9" r="35.6" fill="url(#g)" opacity="0.35"/>
<circle cx="1980.7" cy="1018.5" r="35.3" fill="url(#g)" opacity="0.39"/>
<circle cx="1987.3" cy="1071.3" r="35.0" fill="url(#g)" opacity="0.46"/>
<circle cx="1994.9" cy="1118.7" r="32.4" fill="url(#g)" opacity="0.56"/>
<circle cx="2003.0" cy="1160.3" r="29.4" fill="url(#g)" opacity="0.65"/>
<circle cx="2011.9" cy="1199.0" r="26.0" fill="url(#g)" opacity="0.70"/>
<circle cx="2020.3" cy="812.0" r="33.3" fill="url(#g)" opacity="0.35"/>
<circle cx="2022.1" cy="894.7" r="33.2" fill="url(#g)" opacity="0.35"/>
<circle cx="2025.5" cy="968.0" r="33.0" fill="url(#g)" opacity="0.38"/>
<circle cx="2029.7" cy="1026.9" r="32.7" fill="url(#g)" opacity="0.44"/>
<circle cx="2034.7" cy="1078.9" r="32.4" fill="url(#g)" opacity="0.56"/>
<circle cx="2040.5" cy="1124.5" r="32.0" fill="url(#g)" opacity="0.68"/>
<circle cx="2046.6" cy="1163.6" r="29.1" fill="url(#g)" opacity="0.78"/>
<circle cx="2053.5" cy="1199.0" r="26.0" fill="url(#g)" opacity="0.83"/>
<circle cx="2068.2" cy="815.0" r="30.0" fill="url(#g)" opacity="0.35"/>
<circle cx="2069.2" cy="901.5" r="30.0" fill="url(#g)" opacity="0.36"/>
<circle cx="2071.1" cy="976.7" r="29.8" fill="url(#g)" opacity="0.40"/>
<circle cx="2073.5" cy="1035.9" r="29.6" fill="url(#g)" opacity="0.50"/>
<circle cx="2076.3" cy="1087.0" r="29.4" fill="url(#g)" opacity="0.64"/>
<circle cx="2079.6" cy="1130.6" r="29.1" fill="url(#g)" opacity="0.78"/>
<circle cx="2083.0" cy="1167.0" r="28.9" fill="url(#g)" opacity="0.86"/>
<circle cx="2086.9" cy="1199.0" r="26.0" fill="url(#g)" opacity="0.90"/>
<circle cx="2115.0" cy="818.4" r="26.0" fill="url(#g)" opacity="0.36"/>
<circle cx="2115.0" cy="909.0" r="26.0" fill="url(#g)" opacity="0.37"/>
<circle cx="2115.0" cy="986.4" r="26.0" fill="url(#g)" opacity="0.42"/>
<circle cx="2115.0" cy="1045.9" r="26.0" fill="url(#g)" opacity="0.54"/>
<circle cx="2115.0" cy="1095.9" r="26.0" fill="url(#g)" opacity="0.70"/>
<circle cx="2115.0" cy="1137.5" r="26.0" fill="url(#g)" opacity="0.83"/>
<circle cx="2115.0" cy="1170.9" r="26.0" fill="url(#g)" opacity="0.89"/>
<circle cx="2115.0" cy="1199.0" r="26.0" fill="url(#g)" opacity="0.90"/>
<g filter="url(#bb)"><rect x="1662" y="300" width="33" height="930" fill="#000" fill-opacity="0.42"/><rect x="1190" y="748" width="960" height="28" fill="#000" fill-opacity="0.33"/></g>
<rect x="1677" y="306" width="3" height="920" fill="#000" fill-opacity="0.08"/>
<rect x="1190" y="760" width="960" height="3" fill="#000" fill-opacity="0.08"/>
</g>
<rect x="1186" y="300" width="975" height="935" fill="url(#nz)"/>
<rect x="1186" y="300" width="975" height="935" fill="url(#nz2)"/>
</g>
</svg>
<div class="a chk2" style="left:1718px;top:33px;width:34px;height:1279px"></div>
<div class="a bb" style="left:1719px;top:1px;width:32px;height:32px"></div>
<svg class="a" style="left:1719px;top:1px" width="32" height="32"><path d="M7 21 L15.5 11.5 L24.5 21 Z" fill="#999"/><path d="M7.5 21 H24.5" stroke="#fff" stroke-width="1.2"/></svg>
<div class="a bb" style="left:1719px;top:1312px;width:32px;height:32px"></div>
<svg class="a" style="left:1719px;top:1312px" width="32" height="32"><path d="M7 11 L24.5 11 L15.5 20.5 Z" fill="#999"/><path d="M24.5 11 L15.5 20.5" stroke="#fff" stroke-width="1.2"/></svg>
<div class="a chk2" style="left:33px;top:1345px;width:1652px;height:34px"></div>
<div class="a bb" style="left:1px;top:1346px;width:32px;height:32px"></div>
<svg class="a" style="left:1px;top:1346px" width="32" height="32"><path d="M20.5 7 L20.5 24 L11 15.5 Z" fill="#999"/><path d="M20.5 7 V24" stroke="#fff" stroke-width="1.2"/></svg>
<div class="a bb" style="left:1685px;top:1346px;width:32px;height:32px"></div>
<svg class="a" style="left:1685px;top:1346px" width="32" height="32"><path d="M11.5 7 L21 16 L11.5 24.5 Z" fill="#999"/><path d="M21 16 L11.5 24.5" stroke="#fff" stroke-width="1.2"/></svg>
<div class="a" style="left:1717px;top:1345px;width:35px;height:34px;background:#000"></div>
<svg class="a" style="left:1733px;top:8px" width="20" height="110"><rect x="3" y="3" width="15" height="101" rx="7.5" fill="#1a1a1a" fill-opacity="0.6"/><rect x="5" y="6" width="11" height="95" rx="5.5" fill="#5a5a5a" fill-opacity="0.6"/><defs><linearGradient id="og" x1="0" y1="0" x2="0" y2="1"><stop offset="0" stop-color="#ffbf80"/><stop offset="1" stop-color="#ff8a3c"/></linearGradient></defs><rect x="8" y="34" width="6" height="67" rx="3" fill="url(#og)"/></svg>
<div class="a" style="left:1752px;top:0;width:1px;height:1379px;background:#e8e8e8"></div></div>
<div class="a" style="left:0;top:1467px;width:2560px;height:3px;background:#f0f0f0"></div>
</body></html>
